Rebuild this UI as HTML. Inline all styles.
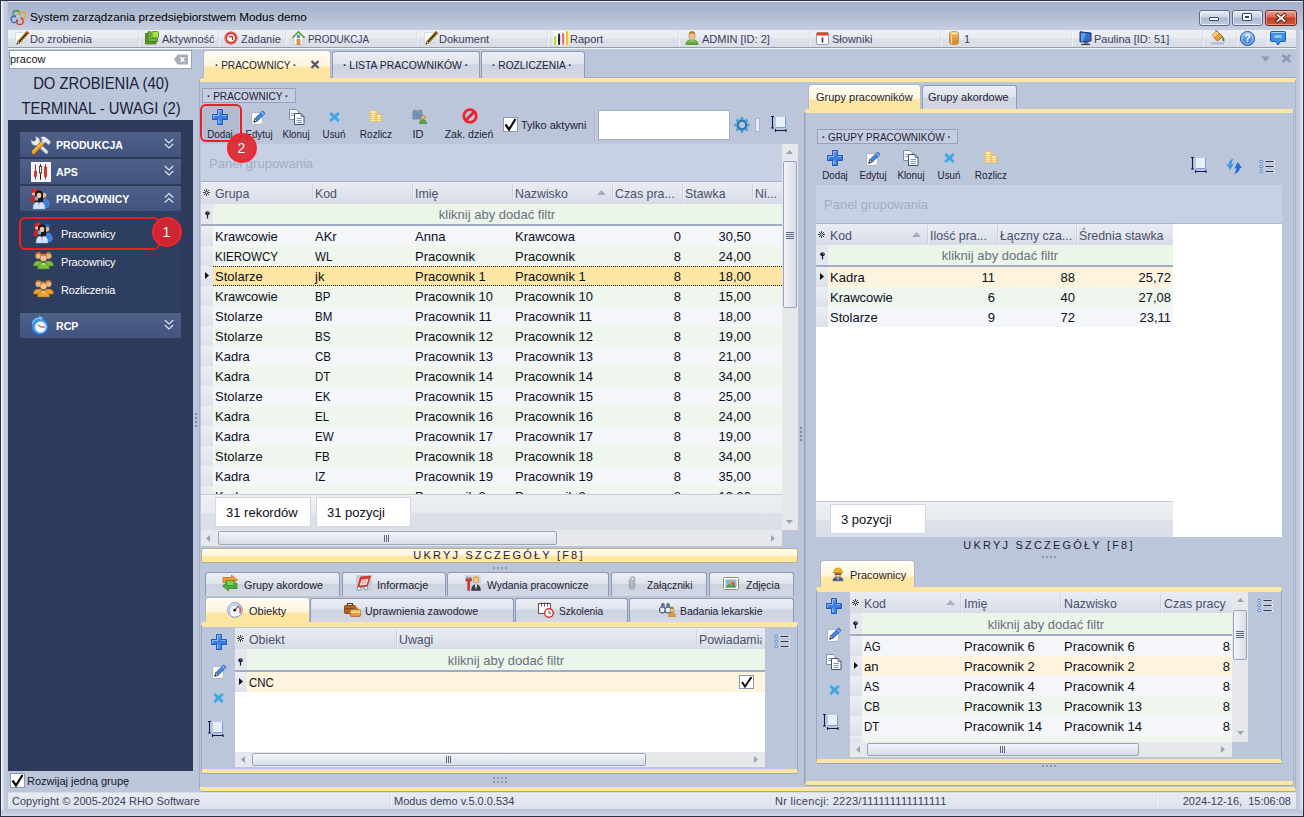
<!DOCTYPE html><html lang="pl"><head><meta charset="utf-8"><title>System zarządzania przedsiębiorstwem Modus demo</title><style>
*{box-sizing:border-box;margin:0;padding:0}
html,body{width:1304px;height:817px;overflow:hidden;background:#bcc6da}
body{font-family:"Liberation Sans","DejaVu Sans",sans-serif;font-size:11px;color:#1e2233;position:relative}
.a{position:absolute;white-space:nowrap}
svg{position:absolute;overflow:visible}
.t11{font-size:11px;line-height:13px}
.t13{font-size:13px;line-height:16px;color:#0c0e18;margin-top:1px}
.hd{font-size:13px;line-height:16px;color:#4b516d;margin-top:1px;transform:scaleX(.95);transform-origin:0 0}
.flt{font-size:13px;line-height:16px;color:#6b6f7c;margin-top:1px}
#frame{left:0;top:0;width:1304px;height:817px;background:#bcc6da;border:1px solid #2b3147}
#title{left:1px;top:1px;width:1302px;height:29px;background:linear-gradient(#a2adc9 0,#acb6cf 30%,#c6cedf 100%)}
#menu{left:8px;top:30px;width:1288px;height:18px;background:linear-gradient(#edf0f4 0,#e8ebf0 47%,#dde1e9 53%,#d9dde7 100%);border-bottom:1px solid #9b9ca2}
.mi{top:33px;font-size:11px;line-height:13px;color:#3a4060}
.msep{top:31px;width:2px;height:15px;border-left:1px solid #dcdfe8;border-right:1px solid #f0f2f6}
.tab{border:1px solid #8f9ab5;border-bottom:none;border-radius:3px 3px 0 0;background:linear-gradient(#eceef4 0,#dfe3ec 45%,#cdd3e0 50%,#d3d8e4 100%)}
.tabA{border:1px solid #aeb7cd;border-bottom:none;border-radius:4px 4px 0 0;background:linear-gradient(#fffdf7 0,#fff5d8 55%,#fde5a2 62%,#fde5a2 100%)}
.yl{background:#fde5a2}
.ghead{background:linear-gradient(#e9ecf2 0,#e1e5ed 50%,#d6dbe6 100%);border-top:1px solid #aab2c8}
.ghead2{background:linear-gradient(#e9ecf2 0,#e1e5ed 50%,#d6dbe6 100%)}
.gsep{background:#a3abc5}
.r0{background:#f5f6fa}
.r1{background:#eef6ee}
.rsel{background:#fde6a3}
.rfoc{background:#fef3dd}
.ind{background:linear-gradient(#eceef4,#dde1ea)}
.sb{background:#e7e8ec}
.thumb{border:1px solid #9aa4bd;border-radius:2px;background:linear-gradient(#f3f5f9,#d7dce7)}
.thumbv{border:1px solid #9aa4bd;border-radius:2px;background:linear-gradient(90deg,#f3f5f9,#d7dce7)}
.cnt{background:#fff;border:1px solid #d3d7e2;font-size:13px;line-height:16px;color:#0c0e18}
.lbl{border:1px solid #98a2bc;background:#c5cee0;font-size:11px;line-height:13px;color:#1e2233}
.nh{left:20px;width:161px;height:25px;background:linear-gradient(#4f6187 0,#485a84 50%,#42547e 100%)}
.nht{left:56px;font-weight:bold;font-size:11px;line-height:13px;color:#fff;transform:scaleX(.96);transform-origin:0 0}
.nit{left:61px;font-size:11px;line-height:13px;color:#fff;letter-spacing:-.2px}
.cb{background:#fff;border:1px solid #8f99b3}
</style></head><body>
<svg width="0" height="0" style="left:0;top:0"><defs>
<linearGradient id="gPlus" x1="0" y1="0" x2="0" y2="1"><stop offset="0" stop-color="#5d9df0"/><stop offset=".5" stop-color="#3a7ae0"/><stop offset="1" stop-color="#4ca6f4"/></linearGradient>
<linearGradient id="gGold" x1="0" y1="0" x2="1" y2="0"><stop offset="0" stop-color="#f5dc86"/><stop offset=".5" stop-color="#fcf0bc"/><stop offset="1" stop-color="#ecc566"/></linearGradient>
<linearGradient id="gRed" x1="0" y1="0" x2="0" y2="1"><stop offset="0" stop-color="#f26a5c"/><stop offset="1" stop-color="#d01818"/></linearGradient>
<linearGradient id="gBlueBall" x1="0" y1="0" x2="0" y2="1"><stop offset="0" stop-color="#8fc2f5"/><stop offset="1" stop-color="#2d6fd0"/></linearGradient>
<linearGradient id="gGreen" x1="0" y1="0" x2="0" y2="1"><stop offset="0" stop-color="#9ad45a"/><stop offset="1" stop-color="#4f9a22"/></linearGradient>
<linearGradient id="gOrange" x1="0" y1="0" x2="0" y2="1"><stop offset="0" stop-color="#f7c068"/><stop offset="1" stop-color="#e08a1e"/></linearGradient>
<radialGradient id="gBadge" cx=".5" cy=".35" r=".7"><stop offset="0" stop-color="#e2303a"/><stop offset="1" stop-color="#c4101c"/></radialGradient>
</defs></svg>
<div id="frame" class="a"></div><div id="title" class="a"></div>
<div class="a " style="left:1px;top:1px;width:1302px;height:1px;background:#f2f4f9"></div>
<div class="a " style="left:1px;top:1px;width:7px;height:815px;background:linear-gradient(90deg,#eef1f7 0,#e1e6f1 25%,#c6cfe1 40%,#bcc6da 100%)"></div>
<div class="a " style="left:1296px;top:30px;width:7px;height:786px;background:linear-gradient(90deg,#bcc6da 0,#c9d1e3 55%,#d9dfec 85%,#e6eaf3 100%)"></div>
<div class="a " style="left:1px;top:810px;width:1302px;height:6px;background:linear-gradient(#bcc6da,#c6cee0 60%,#d5dbe9)"></div>
<svg style="left:10px;top:9px" width="17" height="17" viewBox="0 0 17 17"><circle cx="6.300" cy="4.800" r="3.300" fill="none" stroke="#3f9a3a" stroke-width="1.400"/><circle cx="12" cy="6.300" r="3.300" fill="none" stroke="#e8a820" stroke-width="1.400"/><circle cx="4.500" cy="10.300" r="3.300" fill="none" stroke="#2f6fd0" stroke-width="1.400"/><circle cx="9.800" cy="12.300" r="3.300" fill="none" stroke="#d8402a" stroke-width="1.400"/><circle cx="8.200" cy="8.500" r="2.400" fill="#c9d0e0" opacity=".85"/></svg>
<div class="a " style="left:30px;top:10px;font-size:11.7px;line-height:14px;color:#000">System zarządzania przedsiębiorstwem Modus demo</div>
<div class="a " style="left:1199px;top:10px;width:31px;height:16px;border:1px solid #5d6a8a;border-radius:3px;background:linear-gradient(#e9eef7 0,#c7d2e6 45%,#a9b9d6 50%,#c1cde3 100%);box-shadow:inset 0 0 0 1px rgba(255,255,255,.6)"></div>
<div class="a " style="left:1209px;top:17px;width:10px;height:4px;background:#fff;border:1px solid #3b4560;border-radius:1px"></div>
<div class="a " style="left:1232px;top:10px;width:31px;height:16px;border:1px solid #5d6a8a;border-radius:3px;background:linear-gradient(#e9eef7 0,#c7d2e6 45%,#a9b9d6 50%,#c1cde3 100%);box-shadow:inset 0 0 0 1px rgba(255,255,255,.6)"></div>
<div class="a " style="left:1242px;top:13px;width:10px;height:8px;background:#fff;border:1px solid #3b4560;border-radius:1px"></div>
<div class="a " style="left:1245px;top:16px;width:4px;height:2px;background:#8a94ae;border:1px solid #3b4560"></div>
<div class="a " style="left:1265px;top:10px;width:32px;height:16px;border:1px solid #6a2a22;border-radius:3px;background:linear-gradient(#e8a89a 0,#d8644c 45%,#c23a22 50%,#d05a3a 100%);box-shadow:inset 0 0 0 1px rgba(255,255,255,.35)"></div>
<svg style="left:1276px;top:14px" width="10" height="8" viewBox="0 0 10 8"><path d="M1.500 1l7 6M8.500 1l-7 6" stroke="#3a1a14" stroke-width="3.400" stroke-linecap="square"/><path d="M1.500 1l7 6M8.500 1l-7 6" stroke="#fff" stroke-width="1.800" stroke-linecap="square"/></svg>
<div id="menu" class="a"></div>
<div class="a " style="left:8px;top:48px;width:1288px;height:1px;background:#f3f5f9"></div>
<div class="a mi" style="left:30px;top:33px;">Do zrobienia</div>
<div class="a mi" style="left:162px;top:33px;">Aktywność</div>
<div class="a mi" style="left:241px;top:33px;">Zadanie</div>
<div class="a mi" style="left:308px;top:33px;;transform:scaleX(0.9);transform-origin:0 0">PRODUKCJA</div>
<div class="a mi" style="left:439px;top:33px;">Dokument</div>
<div class="a mi" style="left:570px;top:33px;">Raport</div>
<div class="a mi" style="left:702px;top:33px;">ADMIN [ID: 2]</div>
<div class="a mi" style="left:832px;top:33px;">Słowniki</div>
<div class="a mi" style="left:964px;top:33px;">1</div>
<div class="a mi" style="left:1094px;top:33px;">Paulina [ID: 51]</div>
<div class="a msep" style="left:138px;top:31px;width:2px;height:15px;"></div>
<div class="a msep" style="left:218px;top:31px;width:2px;height:15px;"></div>
<div class="a msep" style="left:285px;top:31px;width:2px;height:15px;"></div>
<div class="a msep" style="left:416px;top:31px;width:2px;height:15px;"></div>
<div class="a msep" style="left:547px;top:31px;width:2px;height:15px;"></div>
<div class="a msep" style="left:678px;top:31px;width:2px;height:15px;"></div>
<div class="a msep" style="left:809px;top:31px;width:2px;height:15px;"></div>
<div class="a msep" style="left:940px;top:31px;width:2px;height:15px;"></div>
<div class="a msep" style="left:1071px;top:31px;width:2px;height:15px;"></div>
<div class="a msep" style="left:1202px;top:31px;width:2px;height:15px;"></div>
<div class="a msep" style="left:1236px;top:31px;width:2px;height:15px;"></div>
<div class="a msep" style="left:1266px;top:31px;width:2px;height:15px;"></div>
<svg style="left:15px;top:31px" width="14" height="16" viewBox="0 0 14 16"><path d="M.500 1.500h9.500v9l-4 4h-5.500z" fill="#fbfbfc" stroke="#d9dce4" stroke-width="1"/><path d="M6 14.500v-4h4z" fill="#e3e5ea" stroke="#c5c8d2" stroke-width=".7"/><path d="M1.800 13.200l1-3.200 8.500-9.300 2.300 2-8.500 9.400z" fill="#f4c41c" stroke="#5a4608" stroke-width=".5"/><path d="M3.700 11.200l8.600-9.500" stroke="#1c1c1c" stroke-width="1.300"/><path d="M11.300 .700l2.300 2 .6-.8-2.200-1.900z" fill="#e02a20"/><path d="M1.800 13.200l1-3.200 2.200 2z" fill="#e9cfa0" stroke="#333" stroke-width=".4"/><path d="M1.800 13.200l.4-1.300.9.800z" fill="#111"/></svg>
<svg style="left:145px;top:31px" width="14" height="14" viewBox="0 0 14 14"><path d="M.5 2.500h3v7.500h7.500v3h-10.500z" fill="#5a9a28" stroke="#3c7216" stroke-width=".8"/><path d="M3 .8h3v6.700h6.500v3h-9.500z" fill="#78b83a" stroke="#3c7216" stroke-width=".8"/><rect x="7" y=".5" width="6.500" height="6.500" rx="1" fill="#a7e04a" stroke="#4c8a1c" stroke-width=".8"/></svg>
<svg style="left:224px;top:31px" width="14" height="14" viewBox="0 0 14 14"><circle cx="7" cy="7" r="6.500" fill="#d8322a"/><circle cx="7" cy="7" r="6" fill="none" stroke="#f28a7a" stroke-width=".8"/><circle cx="7" cy="7" r="4.300" fill="#fff" stroke="#b81c16" stroke-width=".6"/><path d="M5 5.500h3.500v3.500" stroke="#b03028" stroke-width="1.300" fill="none"/></svg>
<svg style="left:292px;top:31px" width="13" height="14" viewBox="0 0 13 14"><path d="M2 6.500v7h9v-7" fill="#fff" stroke="#b9bdc8" stroke-width=".8"/><path d="M.3 7l6.200-6.300 6.200 6.300" fill="none" stroke="#4f9a2c" stroke-width="1.500" stroke-linejoin="round"/><rect x="5" y="8.500" width="3" height="5" fill="#e89a30" stroke="#a8641a" stroke-width=".5"/><rect x="5.300" y="4.500" width="2.400" height="2.400" fill="#5a8fd8" stroke="#2f5fa8" stroke-width=".4"/></svg>
<svg style="left:424px;top:31px" width="14" height="16" viewBox="0 0 14 16"><path d="M.500 1.500h9.500v9l-4 4h-5.500z" fill="#fbfbfc" stroke="#d9dce4" stroke-width="1"/><path d="M6 14.500v-4h4z" fill="#e3e5ea" stroke="#c5c8d2" stroke-width=".7"/><path d="M1.800 13.200l1-3.200 8.500-9.300 2.300 2-8.500 9.400z" fill="#f4c41c" stroke="#5a4608" stroke-width=".5"/><path d="M3.700 11.200l8.600-9.500" stroke="#1c1c1c" stroke-width="1.300"/><path d="M11.300 .700l2.300 2 .6-.8-2.200-1.900z" fill="#e02a20"/><path d="M1.800 13.200l1-3.200 2.200 2z" fill="#e9cfa0" stroke="#333" stroke-width=".4"/><path d="M1.800 13.200l.4-1.300.9.800z" fill="#111"/></svg>
<svg style="left:553px;top:31px" width="16" height="14" viewBox="0 0 16 14"><rect x="0" y="0" width="16" height="14" fill="#fff"/><rect x="1" y="5" width="2.200" height="9" fill="#c9d426"/><rect x="5" y="2.500" width="2.200" height="11.500" rx="1" fill="#25324f"/><rect x="9" y="2" width="2.200" height="12" rx="1" fill="#ee6a78"/><rect x="13" y="0" width="2.400" height="14" fill="#f5c416"/></svg>
<svg style="left:685px;top:31px" width="14" height="14" viewBox="0 0 14 14"><path d="M.800 13.500q.4-4 3.700-4.500l2.500 1.500 2.500-1.500q3.300.5 3.700 4.500z" fill="url(#gGreen)" stroke="#3f7f1c" stroke-width=".6"/><path d="M4 4.500q0-4 3-4t3 4q0 4.500-3 4.500t-3-4.500z" fill="#f1c08a" stroke="#a8702c" stroke-width=".6"/><path d="M3.800 4q.2-3.700 3.200-3.700t3.200 3.700q-1.500-1.800-3.200-1.800t-3.200 1.800z" fill="#b87a2a"/></svg>
<svg style="left:816px;top:32px" width="13" height="13" viewBox="0 0 13 13"><rect x=".500" y=".500" width="12" height="12" rx="1.500" fill="#fff" stroke="#9aa0b0" stroke-width="1"/><path d="M.500 2q0-1.500 1.500-1.500h9q1.500 0 1.500 1.500v1.500h-12z" fill="#e0452c"/><path d="M6.500 5.500v5" stroke="#333" stroke-width="1.600"/></svg>
<svg style="left:949px;top:31px" width="10" height="14" viewBox="0 0 10 14"><path d="M.500 2.500v9q0 2 4.500 2t4.500-2v-9z" fill="url(#gOrange)" stroke="#b8741a" stroke-width=".7"/><ellipse cx="5" cy="2.500" rx="4.500" ry="2" fill="#fbe0a0" stroke="#b8741a" stroke-width=".7"/><path d="M.500 5.500q0 2 4.500 2t4.500-2M.500 8.500q0 2 4.500 2t4.500-2" fill="none" stroke="#b8741a" stroke-width=".6"/><path d="M2.500 4.500v8" stroke="#fdf0c8" stroke-width="1.200" opacity=".8"/></svg>
<svg style="left:1079px;top:31px" width="13" height="14" viewBox="0 0 13 14"><path d="M1 .800l11 1.200v8l-11 1z" fill="#2f6fd0" stroke="#1b2f5c" stroke-width="1"/><path d="M2 2l5 .6-3 7.600-2 .2z" fill="#6fa8f0" opacity=".8"/><path d="M5 11l4-.3.800 2h-5.600z" fill="#5b6478"/><path d="M2 13.500h9" stroke="#3b4258" stroke-width="1.200"/></svg>
<svg style="left:1210px;top:30px" width="15" height="15" viewBox="0 0 15 15"><path d="M2 5l5-4 5.500 5.500-5 4.500z" fill="#f0a030" stroke="#8a5210" stroke-width=".8"/><path d="M2 5l5-4 2 2-5 4z" fill="#fbd48a"/><path d="M12.500 6.500q2.500 2.500 1.500 5-2-1-1.500-5z" fill="#3fa04a" stroke="#1f6a2a" stroke-width=".5"/><path d="M5 .800q2-.8 3 1.500" fill="none" stroke="#555" stroke-width=".8"/><rect x="1" y="12.500" width="13" height="1.800" fill="#aeb4c4"/></svg>
<svg style="left:1240px;top:31px" width="15" height="15" viewBox="0 0 15 15"><circle cx="7.500" cy="7.500" r="7" fill="url(#gBlueBall)" stroke="#2a4fa0" stroke-width="1"/><circle cx="7.500" cy="7.500" r="5.600" fill="none" stroke="#cfe2fb" stroke-width=".8"/><text x="7.500" y="11.300" text-anchor="middle" font-family="Liberation Sans,sans-serif" font-weight="bold" font-size="10.500" fill="#fff">?</text></svg>
<svg style="left:1270px;top:31px" width="16" height="15" viewBox="0 0 16 15"><path d="M.500 1.500q0-1 1-1h13q1 0 1 1v8q0 1-1 1h-4l-2.500 3.500-2.500-3.500h-4q-1 0-1-1z" fill="#3f8fe0" stroke="#1b5fb0" stroke-width="1"/><path d="M1.500 1.500h13" stroke="#a8d0f8" stroke-width="1"/><circle cx="5.500" cy="5.500" r="1" fill="none" stroke="#fff" stroke-width=".7"/><circle cx="8" cy="5.500" r="1" fill="none" stroke="#fff" stroke-width=".7"/><circle cx="10.500" cy="5.500" r="1" fill="none" stroke="#fff" stroke-width=".7"/></svg>
<div class="a " style="left:8px;top:792px;width:1288px;height:17px;background:linear-gradient(#e8ebf1,#dde1ea);border-top:1px solid #d5dae5"></div>
<div class="a t11" style="left:12px;top:795px;color:#3a4060">Copyright © 2005-2024 RHO Software</div>
<div class="a t11" style="left:394px;top:795px;color:#3a4060">Modus demo v.5.0.0.534</div>
<div class="a t11" style="left:775px;top:795px;color:#3a4060;letter-spacing:.3px">Nr licencji: 2223/111111111111111</div>
<div class="a t11" style="right:13px;top:795px;color:#3a4060">2024-12-16,&nbsp; 15:06:08</div>
<div class="a msep" style="left:390px;top:794px;width:2px;height:15px;"></div>
<div class="a msep" style="left:771px;top:794px;width:2px;height:15px;"></div>
<div class="a msep" style="left:1156px;top:794px;width:2px;height:15px;"></div>
<div class="a " style="left:9px;top:50px;width:183px;height:19px;background:#fff;border:1px solid #97a2bd"></div>
<div class="a t11" style="left:10px;top:53px;color:#15182a">pracow</div>
<svg style="left:174px;top:54px" width="14" height="11" viewBox="0 0 14 11"><path d="M0 5.500l3.500-5h9.500q1 0 1 1v8q0 1-1 1h-9.500z" fill="#a9adb6"/><path d="M6.500 3.300l4 4.400M10.500 3.300l-4 4.400" stroke="#fff" stroke-width="1.400"/></svg>
<div class="a " style="left:5.5px;width:190px;text-align:center;top:75px;font-size:16px;line-height:18px;color:#1a2038;transform:scaleX(0.925)">DO ZROBIENIA (40)</div>
<div class="a " style="left:6.0px;width:190px;text-align:center;top:100px;font-size:16px;line-height:18px;color:#1a2038;transform:scaleX(0.925)">TERMINAL - UWAGI (2)</div>
<div class="a " style="left:8px;top:120px;width:185px;height:651px;background:#2d3a59"></div>
<div class="a " style="left:20px;top:211px;width:161px;height:100px;background-color:#2d3d60;background-image:radial-gradient(circle,#37476c 0.6px,transparent 0.9px);background-size:3px 3px"></div>
<div class="a nh" style="left:20px;top:132px;width:161px;height:25px;"></div>
<svg style="left:31px;top:136px" width="21" height="18" viewBox="0 0 21 18"><path d="M6.500 7.500l9 8.500" stroke="#8e97ab" stroke-width="4" stroke-linecap="round"/><path d="M6.500 7.500l9 8.500" stroke="#dfe4ee" stroke-width="2.600" stroke-linecap="round"/><circle cx="4.600" cy="5.200" r="4.300" fill="#e8ecf3" stroke="#9aa3b6" stroke-width=".6"/><circle cx="2.600" cy="3" r="2.400" fill="#485b85"/><path d="M11.200 7.300l-8.700 8.700" stroke="#a8611a" stroke-width="4.600" stroke-linecap="round"/><path d="M11.200 7.300l-8.700 8.700" stroke="#f0a22a" stroke-width="3.400" stroke-linecap="round"/><path d="M10.500 7l-7.500 7.500" stroke="#f9cf7a" stroke-width="1" stroke-linecap="round"/><path d="M9.300 1.600q3.700-2.300 7 1.200l3.700 3.500-2.600 2.600-2.700-2.700-2.200 1.100-2-2q1.800-2-1.200-3.700z" fill="#e3e7ef" stroke="#8e97ab" stroke-width=".6" stroke-linejoin="round"/><path d="M11 1.500q2.500-.8 4.800 1.600l2.800 2.800" fill="none" stroke="#fff" stroke-width=".9"/></svg>
<div class="a nht" style="left:56px;top:139px;">PRODUKCJA</div>
<svg style="left:164px;top:138px" width="10" height="11" viewBox="0 0 10 11"><path d="M.800 1l4.200 4 4.200-4M.800 6l4.200 4 4.200-4" fill="none" stroke="#e3e7f0" stroke-width="1.050"/></svg>
<div class="a nh" style="left:20px;top:159px;width:161px;height:25px;"></div>
<svg style="left:31px;top:162px" width="20" height="20" viewBox="0 0 20 20"><rect width="20" height="20" fill="#f6f6f8"/><path d="M4.500 2.500v15M9.500 2.500v15M14.500 2v15.500" stroke="#b82020" stroke-width="1"/><path d="M9.500 2.500v15" stroke="#222" stroke-width="1"/><rect x="3.200" y="9.500" width="2.600" height="5" fill="#d83a30" stroke="#a81c18" stroke-width=".5"/><rect x="8.500" y="4.500" width="2.200" height="6.500" fill="#f6f6f8" stroke="#222" stroke-width=".8"/><rect x="13.200" y="5" width="2.600" height="9.500" fill="#d83a30" stroke="#a81c18" stroke-width=".5"/></svg>
<div class="a nht" style="left:56px;top:166px;">APS</div>
<svg style="left:164px;top:165px" width="10" height="11" viewBox="0 0 10 11"><path d="M.800 1l4.200 4 4.200-4M.800 6l4.200 4 4.200-4" fill="none" stroke="#e3e7f0" stroke-width="1.050"/></svg>
<div class="a nh" style="left:20px;top:186px;width:161px;height:25px;"></div>
<svg style="left:30px;top:188px" width="21" height="22" viewBox="0 0 21 22"><g><path d="M.500 14q0-6 3-7.500l3 1v7z" fill="#c8281e"/><circle cx="4.500" cy="5" r="2.600" fill="#f0c09a"/><path d="M1.500 4.500q0-4 3.500-4t3.500 3.500l-7 1z" fill="#e0281e"/><path d="M12 20l0-8 3.500-1.500q4 1 4.500 6.500l-2 3z" fill="#3f7fd8"/><circle cx="13.500" cy="7" r="2.800" fill="#e8b88a"/><path d="M10 5.500q0-3.500 4-3.500 3 0 3.500 3l-7.500 1z" fill="#2c5fb8"/><rect x="12" y="4.800" width="3" height="1" fill="#e8c040"/><path d="M5 6q0-3.500 4-3.500t4 3.500v8h-8z" fill="#15151a"/><ellipse cx="9" cy="7.500" rx="2.300" ry="2.800" fill="#f2c8a8"/><rect x="5" y="8.500" width="3" height="4" fill="#7fc0e8" opacity=".9"/><path d="M3 21q0-6 4-7l2 1.500 2-1.500q4 1 4 7z" fill="#cfe6fa" stroke="#8cb8e0" stroke-width=".5"/><path d="M7.500 15l1.500 5 1.500-5-1.500 1z" fill="#f0a8c0"/></g></svg>
<div class="a nht" style="left:56px;top:193px;">PRACOWNICY</div>
<svg style="left:164px;top:192px" width="10" height="11" viewBox="0 0 10 11"><path d="M.800 5.500l4.200-4 4.200 4M.800 10.500l4.200-4 4.200 4" fill="none" stroke="#e3e7f0" stroke-width="1.050"/></svg>
<div class="a nh" style="left:20px;top:313px;width:161px;height:25px;"></div>
<svg style="left:30px;top:316px" width="20" height="20" viewBox="0 0 20 20"><circle cx="10" cy="10.500" r="8.500" fill="#3f8fe0" stroke="#1b5fb0" stroke-width="1"/><path d="M1.500 8q1-6 8-7l-1-1.500 5 2.500-4.500 3 .5-2q-5 1-6 5z" fill="#7fc0f5" stroke="#2f7fd0" stroke-width=".4"/><circle cx="10.500" cy="11" r="5.600" fill="#f4f8fd" stroke="#a8c8e8" stroke-width=".8"/><path d="M10.500 11h4.500" stroke="#d82020" stroke-width="1"/><path d="M10.500 11l-2.500-2.500" stroke="#444" stroke-width="1"/></svg>
<div class="a nht" style="left:56px;top:320px;">RCP</div>
<svg style="left:164px;top:319px" width="10" height="11" viewBox="0 0 10 11"><path d="M.800 1l4.200 4 4.200-4M.800 6l4.200 4 4.200-4" fill="none" stroke="#e3e7f0" stroke-width="1.050"/></svg>
<svg style="left:33px;top:222px" width="21" height="22" viewBox="0 0 21 22"><g><path d="M.500 14q0-6 3-7.500l3 1v7z" fill="#c8281e"/><circle cx="4.500" cy="5" r="2.600" fill="#f0c09a"/><path d="M1.500 4.500q0-4 3.500-4t3.500 3.500l-7 1z" fill="#e0281e"/><path d="M12 20l0-8 3.500-1.500q4 1 4.500 6.500l-2 3z" fill="#3f7fd8"/><circle cx="13.500" cy="7" r="2.800" fill="#e8b88a"/><path d="M10 5.500q0-3.500 4-3.500 3 0 3.500 3l-7.500 1z" fill="#2c5fb8"/><rect x="12" y="4.800" width="3" height="1" fill="#e8c040"/><path d="M5 6q0-3.500 4-3.500t4 3.500v8h-8z" fill="#15151a"/><ellipse cx="9" cy="7.500" rx="2.300" ry="2.800" fill="#f2c8a8"/><rect x="5" y="8.500" width="3" height="4" fill="#7fc0e8" opacity=".9"/><path d="M3 21q0-6 4-7l2 1.500 2-1.500q4 1 4 7z" fill="#cfe6fa" stroke="#8cb8e0" stroke-width=".5"/><path d="M7.500 15l1.500 5 1.500-5-1.500 1z" fill="#f0a8c0"/></g></svg>
<div class="a nit" style="left:61px;top:228px;">Pracownicy</div>
<svg style="left:33px;top:251px" width="21" height="19" viewBox="0 0 21 19"><circle cx="5.5" cy="5" r="3" fill="#e9b98a" stroke="#a8702c" stroke-width=".5"/><path d="M2.5 4q0-3 3-3t3 3q-1.500-1.200-3-1.200t-3 1.200z" fill="#b8742a"/><path d="M0.5 15q0-5 5-5t5 5z" fill="#7fc03a" stroke="#3f7f1c" stroke-width=".5"/><circle cx="15.5" cy="5" r="3" fill="#e9b98a" stroke="#a8702c" stroke-width=".5"/><path d="M12.5 4q0-3 3-3t3 3q-1.500-1.200-3-1.200t-3 1.200z" fill="#b8742a"/><path d="M10.5 15q0-5 5-5t5 5z" fill="#7fc03a" stroke="#3f7f1c" stroke-width=".5"/><circle cx="10.5" cy="7" r="3.400" fill="#f1c49a" stroke="#a8702c" stroke-width=".5"/><path d="M7.1 6q0-3.500 3.400-3.500t3.400 3.500q-1.700-1.300-3.400-1.300t-3.400 1.300z" fill="#c8842a"/><path d="M4.5 18q0-6 6-6t6 6z" fill="#7fc03a" stroke="#3f7f1c" stroke-width=".5"/><path d="M9.0 12.3l1.500 2 1.500-2z" fill="#fff"/></svg>
<div class="a nit" style="left:61px;top:256px;">Pracownicy</div>
<svg style="left:33px;top:279px" width="21" height="19" viewBox="0 0 21 19"><circle cx="5.5" cy="5" r="3" fill="#e9b98a" stroke="#a8702c" stroke-width=".5"/><path d="M2.5 4q0-3 3-3t3 3q-1.500-1.200-3-1.200t-3 1.200z" fill="#b8742a"/><path d="M0.5 15q0-5 5-5t5 5z" fill="#f0a030" stroke="#a8681a" stroke-width=".5"/><circle cx="15.5" cy="5" r="3" fill="#e9b98a" stroke="#a8702c" stroke-width=".5"/><path d="M12.5 4q0-3 3-3t3 3q-1.500-1.200-3-1.200t-3 1.200z" fill="#b8742a"/><path d="M10.5 15q0-5 5-5t5 5z" fill="#f0a030" stroke="#a8681a" stroke-width=".5"/><circle cx="10.5" cy="7" r="3.400" fill="#f1c49a" stroke="#a8702c" stroke-width=".5"/><path d="M7.1 6q0-3.500 3.400-3.500t3.400 3.500q-1.700-1.300-3.400-1.300t-3.400 1.300z" fill="#c8842a"/><path d="M4.5 18q0-6 6-6t6 6z" fill="#f0a030" stroke="#a8681a" stroke-width=".5"/><path d="M9.0 12.3l1.500 2 1.500-2z" fill="#fff"/></svg>
<div class="a nit" style="left:61px;top:284px;">Rozliczenia</div>
<div class="a cb" style="left:10px;top:773px;width:15px;height:15px;"></div>
<svg style="left:11px;top:774px" width="13" height="13" viewBox="0 0 13 13"><path d="M1.500 6.500l3.500 5 6.500-10.500" fill="none" stroke="#0a0a0a" stroke-width="2.200"/></svg>
<div class="a t11" style="left:27px;top:775px;color:#15182a">Rozwijaj jedną grupę</div>
<div class="a " style="left:195px;top:413px;width:2px;height:2px;background:#7b86a8"></div>
<div class="a " style="left:195px;top:417px;width:2px;height:2px;background:#7b86a8"></div>
<div class="a " style="left:195px;top:421px;width:2px;height:2px;background:#7b86a8"></div>
<div class="a " style="left:195px;top:425px;width:2px;height:2px;background:#7b86a8"></div>
<div class="a " style="left:200px;top:77px;width:1096px;height:1px;background:#a3aec8"></div>
<div class="a tabA" style="left:203px;top:50px;width:128px;height:28px;"></div>
<div class="a t11" style="left:215px;top:59px;color:#1e2233;transform:scaleX(0.915);transform-origin:0 0"><b>·</b> PRACOWNICY <b>·</b></div>
<svg style="left:310px;top:60px" width="10" height="9" viewBox="0 0 10 9"><path d="M1.500 1l7 7M8.500 1l-7 7" stroke="#4b5268" stroke-width="2.200"/></svg>
<div class="a tab" style="left:332px;top:51px;width:148px;height:27px;"></div>
<div class="a t11" style="left:343px;top:59px;color:#1e2233;transform:scaleX(0.945);transform-origin:0 0"><b>·</b> LISTA PRACOWNIKÓW <b>·</b></div>
<div class="a tab" style="left:481px;top:51px;width:104px;height:27px;"></div>
<div class="a t11" style="left:492px;top:59px;color:#1e2233;transform:scaleX(0.93);transform-origin:0 0"><b>·</b> ROZLICZENIA <b>·</b></div>
<svg style="left:1261px;top:56px" width="9" height="6" viewBox="0 0 9 6"><path d="M0 .500h9l-4.500 5z" fill="#8e98b4"/></svg>
<svg style="left:1281px;top:54px" width="11" height="9" viewBox="0 0 11 9"><path d="M1.500 1l8 7M9.500 1l-8 7" stroke="#8e98b4" stroke-width="2.400"/></svg>
<div class="a yl" style="left:200px;top:78px;width:1096px;height:4px;border-radius:2px 2px 0 0"></div>
<div class="a yl" style="left:200px;top:787px;width:1096px;height:4px;border-radius:0 0 2px 2px;box-shadow:0 1px 0 #9ba7c1"></div>
<div class="a " style="left:199px;top:80px;width:1px;height:709px;background:#a3aec7"></div>
<div class="a " style="left:1295px;top:80px;width:1px;height:709px;background:#a9b3ca"></div>
<div class="a lbl" style="left:202px;top:88px;width:94px;height:15px;"></div>
<div class="a t11" style="left:207px;top:90px;;transform:scaleX(0.915);transform-origin:0 0"><b>·</b> PRACOWNICY <b>·</b></div>
<div class="a " style="left:203px;top:106px;width:36px;height:34px;background:#b2bbd0;border-radius:2px"></div>
<svg style="left:212px;top:109px" width="16" height="16" viewBox="0 0 16 16"><path d="M5.600 .600h4.800v5h5v4.800h-5v5h-4.800v-5h-5v-4.800h5z" fill="none" stroke="#e4ebf7" stroke-width="2.200" stroke-linejoin="round" opacity=".35"/><path d="M5.600 .600h4.800v5h5v4.800h-5v5h-4.800v-5h-5v-4.800h5z" fill="url(#gPlus)" stroke="#2257b8" stroke-width="1.100" stroke-linejoin="round"/><path d="M6.600 6.600v-5h2.800M1.600 9.400v-2.800h5M6.600 14.400v-4" fill="none" stroke="#a9cdf9" stroke-width=".9" opacity=".9"/><path d="M10.500 6.600h3.900" fill="none" stroke="#a9cdf9" stroke-width=".9" opacity=".9"/></svg>
<svg style="left:250px;top:109px" width="16" height="16" viewBox="0 0 16 16"><path d="M3 3.500h6.500l3 3v9h-11v-10.500q0-1.500 1.500-1.500z" fill="#fdfdfe" stroke="#aeb4c2" stroke-width="1" stroke-linejoin="round"/><path d="M12.500 15.500l-3-.5 3-2.500z" fill="#d5d9e2"/><path d="M3.800 13.200l1.200-3.600 7.600-7.600 2.400 2.400-7.600 7.600z" fill="#3c8ae6" stroke="#1a4a9a" stroke-width=".8" stroke-linejoin="round"/><path d="M3.800 13.200l1.200-3.600 2.400 2.400z" fill="#f0d8b0" stroke="#222" stroke-width=".6"/><path d="M3.800 13.200l.5-1.500 1 1z" fill="#111"/><path d="M11.400 3.200l2.400 2.400" stroke="#9cc4f4" stroke-width="1.200"/></svg>
<svg style="left:289px;top:109px" width="16" height="16" viewBox="0 0 16 16"><path d="M.500 .500h6.500l2.500 2.500v7.500h-9z" fill="#fbfcfe" stroke="#7f8da8" stroke-width="1"/><path d="M2 4.500h5M2 6.500h3" stroke="#8da3cc" stroke-width="1"/><path d="M5.500 4.500h6.500l3 3v8h-9.500z" fill="#fff" stroke="#44546f" stroke-width="1"/><path d="M12 4.500v3h3" fill="none" stroke="#44546f" stroke-width=".8"/><path d="M7.500 9.500h5.500M7.500 11.500h5.500M7.500 13.500h5.500" stroke="#7e97c4" stroke-width="1"/></svg>
<svg style="left:328px;top:111px" width="13" height="12.0" viewBox="0 0 13 12"><path d="M1 3l2.200-2.200 3.300 3 3.300-3 2.200 2.200-3.200 3 3.200 3-2.200 2.200-3.300-3-3.300 3-2.200-2.200 3.200-3z" fill="#46a2de" stroke="#8fcbee" stroke-width=".9" stroke-linejoin="round"/></svg>
<svg style="left:369px;top:110px" width="14" height="12" viewBox="0 0 14 12"><ellipse cx="4.500" cy="10" rx="3.800" ry="1.700" fill="url(#gGold)" stroke="#e0b64e" stroke-width=".6"/><ellipse cx="4.500" cy="8" rx="3.800" ry="1.700" fill="url(#gGold)" stroke="#e0b64e" stroke-width=".6"/><ellipse cx="4.500" cy="6" rx="3.800" ry="1.700" fill="url(#gGold)" stroke="#e0b64e" stroke-width=".6"/><ellipse cx="4.500" cy="4" rx="3.800" ry="1.700" fill="url(#gGold)" stroke="#e0b64e" stroke-width=".6"/><ellipse cx="4.500" cy="2" rx="3.800" ry="1.700" fill="url(#gGold)" stroke="#e0b64e" stroke-width=".6"/><ellipse cx="10.200" cy="10" rx="3.300" ry="1.600" fill="url(#gGold)" stroke="#e0b64e" stroke-width=".6"/><ellipse cx="10.200" cy="8" rx="3.300" ry="1.600" fill="url(#gGold)" stroke="#e0b64e" stroke-width=".6"/><ellipse cx="10.200" cy="6" rx="3.300" ry="1.600" fill="url(#gGold)" stroke="#e0b64e" stroke-width=".6"/></svg>
<svg style="left:412px;top:109px" width="15" height="15" viewBox="0 0 15 15"><path d="M1 3.5q0-2.500 2-2.500t2 2.500v6.500h-4zM6 3.500q0-2.500 2-2.500t2 2.500v6.500h-4z" fill="#8c99b4" stroke="#5c6a88" stroke-width=".7"/><rect x="1.200" y="5" width="3.600" height="3" fill="#5f8fd8"/><rect x="6.200" y="5" width="3.600" height="3" fill="#5f8fd8"/><circle cx="11" cy="8.500" r="2.200" fill="#e9b27a" stroke="#a86a2a" stroke-width=".6"/><path d="M7.500 14.500q0-3.500 3.500-3.500t3.500 3.500z" fill="#58a83a" stroke="#3a7a22" stroke-width=".6"/></svg>
<svg style="left:462px;top:108px" width="16" height="16" viewBox="0 0 16 16"><circle cx="8" cy="8" r="6.300" fill="none" stroke="#e8222a" stroke-width="2.800"/><path d="M3.800 12.200l8.400-8.400" stroke="#e8222a" stroke-width="2.800"/><circle cx="8" cy="8" r="7.600" fill="none" stroke="#f37a78" stroke-width=".5"/></svg>
<div class="a " style="left:180.0px;width:80px;text-align:center;top:128px;font-size:11px;line-height:13px;color:#1e2233;transform:scaleX(0.89)">Dodaj</div>
<div class="a " style="left:218.5px;width:80px;text-align:center;top:128px;font-size:11px;line-height:13px;color:#1e2233;transform:scaleX(0.89)">Edytuj</div>
<div class="a " style="left:256.0px;width:80px;text-align:center;top:128px;font-size:11px;line-height:13px;color:#1e2233;transform:scaleX(0.89)">Klonuj</div>
<div class="a " style="left:294.0px;width:80px;text-align:center;top:128px;font-size:11px;line-height:13px;color:#1e2233;transform:scaleX(0.89)">Usuń</div>
<div class="a " style="left:335.5px;width:80px;text-align:center;top:128px;font-size:11px;line-height:13px;color:#1e2233;transform:scaleX(0.91)">Rozlicz</div>
<div class="a " style="left:378.0px;width:80px;text-align:center;top:128px;font-size:11px;line-height:13px;color:#1e2233;transform:scaleX(1)">ID</div>
<div class="a " style="left:429.0px;width:80px;text-align:center;top:128px;font-size:11px;line-height:13px;color:#1e2233;transform:scaleX(0.96)">Zak. dzień</div>
<div class="a cb" style="left:503px;top:117px;width:15px;height:15px;"></div>
<svg style="left:504px;top:118px" width="13" height="13" viewBox="0 0 13 13"><path d="M1.500 6.500l3.500 5 6.500-10.500" fill="none" stroke="#0a0a0a" stroke-width="2.200"/></svg>
<div class="a t11" style="left:521px;top:119px;color:#1e2233">Tylko aktywni</div>
<div class="a " style="left:594px;top:109px;width:2px;height:31px;border-left:1px solid #aab3c9;border-right:1px solid #ccd4e4"></div>
<div class="a " style="left:598px;top:110px;width:132px;height:30px;background:#fff;border:1px solid #a2acc5"></div>
<svg style="left:734px;top:117px" width="16" height="16" viewBox="0 0 16 16"><g transform="translate(8 8)"><circle cx="0" cy="-6.600" r="1.300" fill="#2a9ec8" transform="rotate(0)"/><circle cx="0" cy="-6.600" r="1.300" fill="#2a9ec8" transform="rotate(45)"/><circle cx="0" cy="-6.600" r="1.300" fill="#2a9ec8" transform="rotate(90)"/><circle cx="0" cy="-6.600" r="1.300" fill="#2a9ec8" transform="rotate(135)"/><circle cx="0" cy="-6.600" r="1.300" fill="#2a9ec8" transform="rotate(180)"/><circle cx="0" cy="-6.600" r="1.300" fill="#2a9ec8" transform="rotate(225)"/><circle cx="0" cy="-6.600" r="1.300" fill="#2a9ec8" transform="rotate(270)"/><circle cx="0" cy="-6.600" r="1.300" fill="#2a9ec8" transform="rotate(315)"/><circle r="6.200" fill="none" stroke="#6fa8d0" stroke-width=".6"/><circle r="4.300" fill="none" stroke="#2477b8" stroke-width="2.200"/></g></svg>
<div class="a " style="left:755px;top:118px;width:5px;height:14px;background:#e6e9f0;border:1px solid #a9b2c8"></div>
<svg style="left:771px;top:116px" width="16" height="16" viewBox="0 0 16 16"><path d="M0 .500h3M1.500 .500v11.500M0 12h3" stroke="#0f1c4c" stroke-width="1.100" fill="none"/><rect x="4.500" y=".500" width="10" height="11" fill="#e9eef8" stroke="#b9c9ea" stroke-width="1"/><path d="M14.500 1v10.500h-9.500" fill="none" stroke="#6f98d6" stroke-width=".9"/><path d="M4.500 14.500h10.500M4.500 13v3M15 13v3" stroke="#0f1c4c" stroke-width="1.100" fill="none"/></svg>
<div class="a " style="left:201px;top:144px;width:581px;height:37px;background:#c8d1e3"></div>
<div class="a " style="left:209px;top:156px;font-size:13px;line-height:16px;color:#a3adc4">Panel grupowania</div>
<div class="a ghead" style="left:201px;top:181px;width:581px;height:23px;"></div>
<svg style="left:203px;top:189px" width="7" height="7" viewBox="0 0 7 7"><path d="M3.500 0v7M0 3.500h7M1 1l5 5M6 1l-5 5" stroke="#15151c" stroke-width=".8"/><circle cx="3.500" cy="3.500" r="1" fill="#f2f3f7"/></svg>
<div class="a hd" style="left:215px;top:185px;">Grupa</div>
<div class="a hd" style="left:315px;top:185px;">Kod</div>
<div class="a " style="left:312px;top:183px;width:2px;height:20px;border-left:1px solid #ccd1de;border-right:1px solid #eef0f5"></div>
<div class="a hd" style="left:415px;top:185px;">Imię</div>
<div class="a " style="left:412px;top:183px;width:2px;height:20px;border-left:1px solid #ccd1de;border-right:1px solid #eef0f5"></div>
<div class="a hd" style="left:515px;top:185px;">Nazwisko</div>
<div class="a " style="left:512px;top:183px;width:2px;height:20px;border-left:1px solid #ccd1de;border-right:1px solid #eef0f5"></div>
<div class="a hd" style="left:615px;top:185px;">Czas pra...</div>
<div class="a " style="left:612px;top:183px;width:2px;height:20px;border-left:1px solid #ccd1de;border-right:1px solid #eef0f5"></div>
<div class="a hd" style="left:685px;top:185px;">Stawka</div>
<div class="a " style="left:682px;top:183px;width:2px;height:20px;border-left:1px solid #ccd1de;border-right:1px solid #eef0f5"></div>
<div class="a hd" style="left:755px;top:185px;">Ni...</div>
<div class="a " style="left:752px;top:183px;width:2px;height:20px;border-left:1px solid #ccd1de;border-right:1px solid #eef0f5"></div>
<svg style="left:597px;top:190px" width="9" height="5" viewBox="0 0 9 5"><path d="M0 5l4.500-5 4.500 5z" fill="#a5adc2"/></svg>
<div class="a " style="left:201px;top:204px;width:12px;height:20px;background:#e4e7ee"></div>
<svg style="left:205px;top:211px" width="5" height="8" viewBox="0 0 5 8"><ellipse cx="2.500" cy="2.200" rx="2.300" ry="2" fill="#1c1c24"/><circle cx="3" cy="1.800" r=".6" fill="#f0f0f4"/><path d="M2.500 4v3.500" stroke="#1c1c24" stroke-width="1.200"/></svg>
<div class="a " style="left:213px;top:204px;width:569px;height:20px;background:#ebf5ea"></div>
<div class="a flt" style="left:347.0px;width:300px;text-align:center;top:206px;">kliknij aby dodać filtr</div>
<div class="a gsep" style="left:201px;top:224px;width:581px;height:2px;"></div>
<div class="a" style="left:201px;top:226px;width:581px;height:268px;overflow:hidden">
<div class="a ind" style="left:0;top:0px;width:12px;height:20px"></div>
<div class="a r0" style="left:12px;top:0px;width:569px;height:20px"></div>
<div class="a t13" style="left:14px;top:2px">Krawcowie</div>
<div class="a t13" style="left:114px;top:2px">AKr</div>
<div class="a t13" style="left:214px;top:2px">Anna</div>
<div class="a t13" style="left:314px;top:2px">Krawcowa</div>
<div class="a t13" style="right:101px;top:2px">0</div>
<div class="a t13" style="right:31px;top:2px">30,50</div>
<div class="a ind" style="left:0;top:20px;width:12px;height:20px"></div>
<div class="a r1" style="left:12px;top:20px;width:569px;height:20px"></div>
<div class="a t13" style="left:14px;top:22px;transform:scaleX(.89);transform-origin:0 0">KIEROWCY</div>
<div class="a t13" style="left:114px;top:22px;transform:scaleX(.89);transform-origin:0 0">WL</div>
<div class="a t13" style="left:214px;top:22px">Pracownik</div>
<div class="a t13" style="left:314px;top:22px">Pracownik</div>
<div class="a t13" style="right:101px;top:22px">8</div>
<div class="a t13" style="right:31px;top:22px">24,00</div>
<div class="a ind" style="left:0;top:40px;width:12px;height:20px"></div>
<div class="a rsel" style="left:12px;top:40px;width:569px;height:20px"></div>
<div class="a t13" style="left:14px;top:42px">Stolarze</div>
<div class="a t13" style="left:114px;top:42px">jk</div>
<div class="a t13" style="left:214px;top:42px">Pracownik 1</div>
<div class="a t13" style="left:314px;top:42px">Pracownik 1</div>
<div class="a t13" style="right:101px;top:42px">8</div>
<div class="a t13" style="right:31px;top:42px">18,00</div>
<div class="a ind" style="left:0;top:60px;width:12px;height:20px"></div>
<div class="a r1" style="left:12px;top:60px;width:569px;height:20px"></div>
<div class="a t13" style="left:14px;top:62px">Krawcowie</div>
<div class="a t13" style="left:114px;top:62px;transform:scaleX(.89);transform-origin:0 0">BP</div>
<div class="a t13" style="left:214px;top:62px">Pracownik 10</div>
<div class="a t13" style="left:314px;top:62px">Pracownik 10</div>
<div class="a t13" style="right:101px;top:62px">8</div>
<div class="a t13" style="right:31px;top:62px">15,00</div>
<div class="a ind" style="left:0;top:80px;width:12px;height:20px"></div>
<div class="a r0" style="left:12px;top:80px;width:569px;height:20px"></div>
<div class="a t13" style="left:14px;top:82px">Stolarze</div>
<div class="a t13" style="left:114px;top:82px;transform:scaleX(.89);transform-origin:0 0">BM</div>
<div class="a t13" style="left:214px;top:82px">Pracownik 11</div>
<div class="a t13" style="left:314px;top:82px">Pracownik 11</div>
<div class="a t13" style="right:101px;top:82px">8</div>
<div class="a t13" style="right:31px;top:82px">18,00</div>
<div class="a ind" style="left:0;top:100px;width:12px;height:20px"></div>
<div class="a r1" style="left:12px;top:100px;width:569px;height:20px"></div>
<div class="a t13" style="left:14px;top:102px">Stolarze</div>
<div class="a t13" style="left:114px;top:102px;transform:scaleX(.89);transform-origin:0 0">BS</div>
<div class="a t13" style="left:214px;top:102px">Pracownik 12</div>
<div class="a t13" style="left:314px;top:102px">Pracownik 12</div>
<div class="a t13" style="right:101px;top:102px">8</div>
<div class="a t13" style="right:31px;top:102px">19,00</div>
<div class="a ind" style="left:0;top:120px;width:12px;height:20px"></div>
<div class="a r0" style="left:12px;top:120px;width:569px;height:20px"></div>
<div class="a t13" style="left:14px;top:122px">Kadra</div>
<div class="a t13" style="left:114px;top:122px;transform:scaleX(.89);transform-origin:0 0">CB</div>
<div class="a t13" style="left:214px;top:122px">Pracownik 13</div>
<div class="a t13" style="left:314px;top:122px">Pracownik 13</div>
<div class="a t13" style="right:101px;top:122px">8</div>
<div class="a t13" style="right:31px;top:122px">21,00</div>
<div class="a ind" style="left:0;top:140px;width:12px;height:20px"></div>
<div class="a r1" style="left:12px;top:140px;width:569px;height:20px"></div>
<div class="a t13" style="left:14px;top:142px">Kadra</div>
<div class="a t13" style="left:114px;top:142px;transform:scaleX(.89);transform-origin:0 0">DT</div>
<div class="a t13" style="left:214px;top:142px">Pracownik 14</div>
<div class="a t13" style="left:314px;top:142px">Pracownik 14</div>
<div class="a t13" style="right:101px;top:142px">8</div>
<div class="a t13" style="right:31px;top:142px">34,00</div>
<div class="a ind" style="left:0;top:160px;width:12px;height:20px"></div>
<div class="a r0" style="left:12px;top:160px;width:569px;height:20px"></div>
<div class="a t13" style="left:14px;top:162px">Stolarze</div>
<div class="a t13" style="left:114px;top:162px;transform:scaleX(.89);transform-origin:0 0">EK</div>
<div class="a t13" style="left:214px;top:162px">Pracownik 15</div>
<div class="a t13" style="left:314px;top:162px">Pracownik 15</div>
<div class="a t13" style="right:101px;top:162px">8</div>
<div class="a t13" style="right:31px;top:162px">25,00</div>
<div class="a ind" style="left:0;top:180px;width:12px;height:20px"></div>
<div class="a r1" style="left:12px;top:180px;width:569px;height:20px"></div>
<div class="a t13" style="left:14px;top:182px">Kadra</div>
<div class="a t13" style="left:114px;top:182px;transform:scaleX(.89);transform-origin:0 0">EL</div>
<div class="a t13" style="left:214px;top:182px">Pracownik 16</div>
<div class="a t13" style="left:314px;top:182px">Pracownik 16</div>
<div class="a t13" style="right:101px;top:182px">8</div>
<div class="a t13" style="right:31px;top:182px">24,00</div>
<div class="a ind" style="left:0;top:200px;width:12px;height:20px"></div>
<div class="a r0" style="left:12px;top:200px;width:569px;height:20px"></div>
<div class="a t13" style="left:14px;top:202px">Kadra</div>
<div class="a t13" style="left:114px;top:202px;transform:scaleX(.89);transform-origin:0 0">EW</div>
<div class="a t13" style="left:214px;top:202px">Pracownik 17</div>
<div class="a t13" style="left:314px;top:202px">Pracownik 17</div>
<div class="a t13" style="right:101px;top:202px">8</div>
<div class="a t13" style="right:31px;top:202px">19,00</div>
<div class="a ind" style="left:0;top:220px;width:12px;height:20px"></div>
<div class="a r1" style="left:12px;top:220px;width:569px;height:20px"></div>
<div class="a t13" style="left:14px;top:222px">Stolarze</div>
<div class="a t13" style="left:114px;top:222px;transform:scaleX(.89);transform-origin:0 0">FB</div>
<div class="a t13" style="left:214px;top:222px">Pracownik 18</div>
<div class="a t13" style="left:314px;top:222px">Pracownik 18</div>
<div class="a t13" style="right:101px;top:222px">8</div>
<div class="a t13" style="right:31px;top:222px">34,00</div>
<div class="a ind" style="left:0;top:240px;width:12px;height:20px"></div>
<div class="a r0" style="left:12px;top:240px;width:569px;height:20px"></div>
<div class="a t13" style="left:14px;top:242px">Kadra</div>
<div class="a t13" style="left:114px;top:242px;transform:scaleX(.89);transform-origin:0 0">IZ</div>
<div class="a t13" style="left:214px;top:242px">Pracownik 19</div>
<div class="a t13" style="left:314px;top:242px">Pracownik 19</div>
<div class="a t13" style="right:101px;top:242px">8</div>
<div class="a t13" style="right:31px;top:242px">35,00</div>
<div class="a ind" style="left:0;top:260px;width:12px;height:20px"></div>
<div class="a r1" style="left:12px;top:260px;width:569px;height:20px"></div>
<div class="a t13" style="left:14px;top:262px">Kadra</div>
<div class="a t13" style="left:114px;top:262px">an</div>
<div class="a t13" style="left:214px;top:262px">Pracownik 2</div>
<div class="a t13" style="left:314px;top:262px">Pracownik 2</div>
<div class="a t13" style="right:101px;top:262px">8</div>
<div class="a t13" style="right:31px;top:262px">19,00</div>
<div class="a" style="left:12px;top:40px;width:569px;height:20px;border-top:1px dotted #111;border-bottom:1px dotted #111"></div>
<svg style="left:4px;top:46px" width="4" height="7"><path d="M0 0l4 3.500-4 3.500z" fill="#111"/></svg>
</div>
<div class="a " style="left:201px;top:494px;width:581px;height:36px;background:linear-gradient(#eef0f4 0,#e7eaf0 50%,#dde1ea 53%,#dadee8 100%);border-top:1px solid #c5cbd9"></div>
<div class="a cnt" style="left:215px;top:497px;width:96px;height:30px;padding:7px 0 0 10px">31 rekordów</div>
<div class="a cnt" style="left:316px;top:497px;width:95px;height:30px;padding:7px 0 0 10px">31 pozycji</div>
<div class="a sb" style="left:782px;top:144px;width:16px;height:386px;"></div>
<svg style="left:786px;top:150px" width="7" height="4" viewBox="0 0 7 4"><path d="M0 4l3.500-4 3.500 4z" fill="#9aa2b6"/></svg>
<svg style="left:786px;top:520px" width="7" height="4" viewBox="0 0 7 4"><path d="M0 0l3.500 4 3.500-4z" fill="#9aa2b6"/></svg>
<div class="a thumbv" style="left:783px;top:161px;width:14px;height:147px;"></div>
<div class="a " style="left:786px;top:232px;width:8px;height:1px;background:#5d6680"></div>
<div class="a " style="left:786px;top:234px;width:8px;height:1px;background:#5d6680"></div>
<div class="a " style="left:786px;top:236px;width:8px;height:1px;background:#5d6680"></div>
<div class="a " style="left:786px;top:238px;width:8px;height:1px;background:#5d6680"></div>
<div class="a sb" style="left:201px;top:530px;width:581px;height:16px;"></div>
<svg style="left:206px;top:535px" width="4" height="7" viewBox="0 0 4 7"><path d="M4 0l-4 3.500 4 3.500z" fill="#9aa2b6"/></svg>
<svg style="left:771px;top:535px" width="4" height="7" viewBox="0 0 4 7"><path d="M0 0l4 3.500-4 3.500z" fill="#9aa2b6"/></svg>
<div class="a thumb" style="left:218px;top:531px;width:339px;height:14px;"></div>
<div class="a " style="left:384px;top:535px;width:1px;height:7px;background:#5d6680"></div>
<div class="a " style="left:386px;top:535px;width:1px;height:7px;background:#5d6680"></div>
<div class="a " style="left:388px;top:535px;width:1px;height:7px;background:#5d6680"></div>
<div class="a " style="left:201px;top:548px;width:597px;height:15px;border:1px solid #b9ad8a;border-radius:2px;background:linear-gradient(#fffbee 0,#fff4d9 50%,#fde5a2 56%,#fde5a2 100%)"></div>
<div class="a " style="left:299.0px;width:400px;text-align:center;top:549px;font-size:11px;line-height:13px;letter-spacing:2.2px;color:#1e2233">UKRYJ SZCZEGÓŁY [F8]</div>
<div class="a " style="left:493px;top:567px;width:2px;height:2px;background:#8f99b3"></div>
<div class="a " style="left:497px;top:567px;width:2px;height:2px;background:#8f99b3"></div>
<div class="a " style="left:501px;top:567px;width:2px;height:2px;background:#8f99b3"></div>
<div class="a " style="left:505px;top:567px;width:2px;height:2px;background:#8f99b3"></div>
<div class="a " style="left:800px;top:427px;width:2px;height:2px;background:#7b86a8"></div>
<div class="a " style="left:800px;top:431px;width:2px;height:2px;background:#7b86a8"></div>
<div class="a " style="left:800px;top:435px;width:2px;height:2px;background:#7b86a8"></div>
<div class="a " style="left:800px;top:439px;width:2px;height:2px;background:#7b86a8"></div>
<div class="a tab" style="left:205px;top:572px;width:135px;height:24px;"></div>
<svg style="left:222px;top:575px" width="16" height="16" viewBox="0 0 16 16"><path d="M1 2.500h8.500v-2.300l6 4.800-6 4.800v-2.300h-8.500z" fill="#f29a2e" stroke="#c0681c" stroke-width=".7" stroke-linejoin="round"/><path d="M15 8.500h-8.500v-2.300l-6 4.800 6 4.800v-2.300h8.500z" fill="#49b23a" stroke="#2a7e1e" stroke-width=".7" stroke-linejoin="round"/><rect x="4.500" y="5.500" width="7.500" height="5" fill="#7cd05a" stroke="#2a7e1e" stroke-width=".6"/></svg>
<div class="a t11" style="left:244px;top:579px;color:#1e2233;transform:scaleX(0.98);transform-origin:0 0">Grupy akordowe</div>
<div class="a tab" style="left:342px;top:572px;width:104px;height:24px;"></div>
<svg style="left:356px;top:575px" width="16" height="16" viewBox="0 0 16 16"><rect width="16" height="16" fill="#c9ccd6"/><path d="M4.500 2l10-1-3 10-10 1.500z" fill="#e0382c" stroke="#9a1c16" stroke-width=".6"/><path d="M5.500 4.500l7-.8-1.800 6-7 .9z" fill="#fbeaea"/><path d="M5 6l6.500-.8M4.500 8l6.500-.8M7 4.500l-1.300 5M9.500 4.200l-1.300 5" stroke="#d87870" stroke-width=".5"/><circle cx="3" cy="13.500" r="1.800" fill="#f0f0f0" stroke="#555" stroke-width=".5"/><circle cx="10" cy="13" r="1.800" fill="#f0f0f0" stroke="#555" stroke-width=".5"/></svg>
<div class="a t11" style="left:377px;top:579px;color:#1e2233">Informacje</div>
<div class="a tab" style="left:447px;top:572px;width:162px;height:24px;"></div>
<svg style="left:465px;top:575px" width="16" height="16" viewBox="0 0 16 16"><rect width="16" height="16" fill="#d4d7e0"/><path d="M1 3.500h5.500v2.500h-1.800v9.500h-2v-9.500h-1.700z" fill="#d8322a" stroke="#8a1a14" stroke-width=".4"/><path d="M1 2.500h5.500" stroke="#9aa0ac" stroke-width="1.500"/><circle cx="11" cy="5" r="3" fill="#f3c79a" stroke="#a8702c" stroke-width=".5"/><path d="M8 4q0-3 3-3t3 3q-1.500-1-3-1t-3 1z" fill="#e8b03a"/><path d="M6.500 15.500q0-6 4.500-6t4.500 6z" fill="#3b3f4c" stroke="#222" stroke-width=".4"/><path d="M9.800 9.500l1.200 5 1.200-5z" fill="#fff"/></svg>
<div class="a t11" style="left:487px;top:579px;color:#1e2233;transform:scaleX(0.95);transform-origin:0 0">Wydania pracownicze</div>
<div class="a tab" style="left:611px;top:572px;width:96px;height:24px;"></div>
<svg style="left:627px;top:576px" width="10" height="14" viewBox="0 0 10 14"><path d="M2.500 4v6.500q0 2.500 2.500 2.500t2.500-2.500v-7.500q0-2-1.800-2t-1.800 2v7q0 1 1 1t1-1v-5.500" fill="none" stroke="#a9adb8" stroke-width="1.500" stroke-linecap="round"/></svg>
<div class="a t11" style="left:647px;top:579px;color:#1e2233;transform:scaleX(0.93);transform-origin:0 0">Załączniki</div>
<div class="a tab" style="left:709px;top:572px;width:85px;height:24px;"></div>
<svg style="left:723px;top:577px" width="16" height="13" viewBox="0 0 16 13"><rect x=".500" y=".500" width="15" height="12" rx="1" fill="#fdfdfd" stroke="#9a8a6a" stroke-width="1"/><rect x="2.500" y="2.500" width="11" height="8" fill="#7fb8e8"/><path d="M2.500 10.500l3.500-4 2.500 2.500 2-2 3 3.500z" fill="#4f9a3a"/><circle cx="8" cy="5.500" r="2" fill="#f0a020"/><circle cx="10" cy="6.500" r="1.500" fill="#e8402a"/></svg>
<div class="a t11" style="left:746px;top:579px;color:#1e2233;transform:scaleX(0.95);transform-origin:0 0">Zdjęcia</div>
<div class="a tabA" style="left:205px;top:597px;width:105px;height:26px;"></div>
<svg style="left:227px;top:602px" width="16" height="16" viewBox="0 0 16 16"><circle cx="8" cy="8" r="7.300" fill="#f6f8fc" stroke="#6e84bc" stroke-width=".9"/><path d="M3.500 11.500a5.500 5.500 0 1 1 9 0" fill="none" stroke="#a9c8f2" stroke-width="1.600"/><path d="M12.300 5a5.500 5.500 0 0 1 .6 5.500" stroke="#e8503a" stroke-width="1.700" fill="none"/><path d="M7.800 8.200l4-4.700" stroke="#1a1a22" stroke-width="1"/><circle cx="7.800" cy="8.200" r="1.400" fill="#22283c"/></svg>
<div class="a t11" style="left:249px;top:605px;color:#1e2233">Obiekty</div>
<div class="a tab" style="left:310px;top:598px;width:204px;height:24px;"></div>
<svg style="left:344px;top:602px" width="17" height="15" viewBox="0 0 17 15"><path d="M3.500 3.500v-2h5v2" fill="none" stroke="#6a3a12" stroke-width="1.200"/><rect x=".500" y="3.500" width="11" height="8" rx="1" fill="#b8641e" stroke="#6a3a12" stroke-width=".8"/><rect x=".500" y="6" width="11" height="1.500" fill="#8a4a14"/><rect x="6.500" y="7.500" width="10" height="7" rx="1" fill="url(#gOrange)" stroke="#a8681a" stroke-width=".8"/><rect x="6.500" y="9.500" width="10" height="1.300" fill="#fbe0a8"/><path d="M9.500 7.500v-1.500h4v1.500" fill="none" stroke="#a8681a" stroke-width="1"/></svg>
<div class="a t11" style="left:365px;top:605px;color:#1e2233;transform:scaleX(0.975);transform-origin:0 0">Uprawnienia zawodowe</div>
<div class="a tab" style="left:515px;top:598px;width:113px;height:24px;"></div>
<svg style="left:538px;top:602px" width="16" height="16" viewBox="0 0 16 16"><rect x=".500" y="1.500" width="12" height="10" fill="#fff" stroke="#6a4a5a" stroke-width="1"/><path d="M3.500 .500v4M6.500 .500v4M9.500 .500v4" stroke="#6a4a5a" stroke-width="1"/><circle cx="11" cy="11" r="4.300" fill="#fff" stroke="#d8322a" stroke-width="1.500"/><path d="M11 8.800v2.400h2" fill="none" stroke="#333" stroke-width=".9"/></svg>
<div class="a t11" style="left:559px;top:605px;color:#1e2233;transform:scaleX(0.925);transform-origin:0 0">Szkolenia</div>
<div class="a tab" style="left:629px;top:598px;width:165px;height:24px;"></div>
<svg style="left:659px;top:602px" width="17" height="15" viewBox="0 0 17 15"><circle cx="3.500" cy="8" r="3" fill="#e8eef8" stroke="#4a5a7c" stroke-width="1.200"/><circle cx="9" cy="8" r="3" fill="#e8eef8" stroke="#4a5a7c" stroke-width="1.200"/><path d="M2 5.500l1-4h2l.5 3.500M7.500 5l.5-3.500h2l1 4" fill="#6a7a9c" stroke="#4a5a7c" stroke-width=".7"/><circle cx="13" cy="8" r="2.200" fill="#f0c08a" stroke="#a8702c" stroke-width=".5"/><path d="M9.500 14.500q0-4 3.500-4t3.500 4z" fill="#e8a02a" stroke="#a8681a" stroke-width=".5"/><path d="M11 7q0-2.500 2-2.500t2 2.500" fill="#58a83a"/></svg>
<div class="a t11" style="left:680px;top:605px;color:#1e2233;transform:scaleX(0.95);transform-origin:0 0">Badania lekarskie</div>
<div class="a yl" style="left:201px;top:622px;width:597px;height:5px;border-radius:2px 2px 0 0"></div>
<div class="a yl" style="left:201px;top:769px;width:597px;height:4px;border-radius:0 0 2px 2px;box-shadow:0 1px 0 #9ba7c1"></div>
<div class="a " style="left:201px;top:625px;width:1px;height:146px;background:#9ba7c1"></div>
<div class="a " style="left:797px;top:625px;width:1px;height:146px;background:#9ba7c1"></div>
<svg style="left:211px;top:634px" width="16" height="16" viewBox="0 0 16 16"><path d="M5.600 .600h4.800v5h5v4.800h-5v5h-4.800v-5h-5v-4.800h5z" fill="none" stroke="#e4ebf7" stroke-width="2.200" stroke-linejoin="round" opacity=".35"/><path d="M5.600 .600h4.800v5h5v4.800h-5v5h-4.800v-5h-5v-4.800h5z" fill="url(#gPlus)" stroke="#2257b8" stroke-width="1.100" stroke-linejoin="round"/><path d="M6.600 6.600v-5h2.800M1.600 9.400v-2.800h5M6.600 14.400v-4" fill="none" stroke="#a9cdf9" stroke-width=".9" opacity=".9"/><path d="M10.500 6.600h3.900" fill="none" stroke="#a9cdf9" stroke-width=".9" opacity=".9"/></svg>
<svg style="left:211px;top:663px" width="16" height="16" viewBox="0 0 16 16"><path d="M3 3.500h6.500l3 3v9h-11v-10.500q0-1.500 1.500-1.500z" fill="#fdfdfe" stroke="#aeb4c2" stroke-width="1" stroke-linejoin="round"/><path d="M12.500 15.500l-3-.5 3-2.500z" fill="#d5d9e2"/><path d="M3.800 13.200l1.200-3.600 7.600-7.600 2.400 2.400-7.600 7.600z" fill="#3c8ae6" stroke="#1a4a9a" stroke-width=".8" stroke-linejoin="round"/><path d="M3.800 13.200l1.200-3.600 2.400 2.400z" fill="#f0d8b0" stroke="#222" stroke-width=".6"/><path d="M3.800 13.200l.5-1.500 1 1z" fill="#111"/><path d="M11.400 3.200l2.400 2.400" stroke="#9cc4f4" stroke-width="1.200"/></svg>
<svg style="left:212px;top:692px" width="13" height="12.0" viewBox="0 0 13 12"><path d="M1 3l2.200-2.200 3.300 3 3.300-3 2.200 2.200-3.200 3 3.200 3-2.200 2.200-3.300-3-3.300 3-2.200-2.200 3.200-3z" fill="#46a2de" stroke="#8fcbee" stroke-width=".9" stroke-linejoin="round"/></svg>
<svg style="left:208px;top:721px" width="16" height="16" viewBox="0 0 16 16"><path d="M0 .500h3M1.500 .500v11.500M0 12h3" stroke="#0f1c4c" stroke-width="1.100" fill="none"/><rect x="4.500" y=".500" width="10" height="11" fill="#e9eef8" stroke="#b9c9ea" stroke-width="1"/><path d="M14.500 1v10.500h-9.500" fill="none" stroke="#6f98d6" stroke-width=".9"/><path d="M4.500 14.500h10.500M4.500 13v3M15 13v3" stroke="#0f1c4c" stroke-width="1.100" fill="none"/></svg>
<div class="a ghead2" style="left:235px;top:628px;width:530px;height:21px;"></div>
<svg style="left:237px;top:635px" width="7" height="7" viewBox="0 0 7 7"><path d="M3.500 0v7M0 3.500h7M1 1l5 5M6 1l-5 5" stroke="#15151c" stroke-width=".8"/><circle cx="3.500" cy="3.500" r="1" fill="#f2f3f7"/></svg>
<div class="a hd" style="left:249px;top:631px;">Obiekt</div>
<div class="a hd" style="left:399px;top:631px;">Uwagi</div>
<div class="a hd" style="left:699px;top:631px;width:66px;overflow:hidden">Powiadamiaj</div>
<div class="a " style="left:396px;top:630px;width:2px;height:18px;border-left:1px solid #ccd1de;border-right:1px solid #eef0f5"></div>
<div class="a " style="left:696px;top:630px;width:2px;height:18px;border-left:1px solid #ccd1de;border-right:1px solid #eef0f5"></div>
<div class="a " style="left:235px;top:649px;width:12px;height:21px;background:#e4e7ee"></div>
<svg style="left:238px;top:658px" width="5" height="8" viewBox="0 0 5 8"><ellipse cx="2.500" cy="2.200" rx="2.300" ry="2" fill="#1c1c24"/><circle cx="3" cy="1.800" r=".6" fill="#f0f0f4"/><path d="M2.500 4v3.500" stroke="#1c1c24" stroke-width="1.200"/></svg>
<div class="a " style="left:247px;top:649px;width:518px;height:21px;background:#ebf5ea"></div>
<div class="a flt" style="left:356.0px;width:300px;text-align:center;top:652px;">kliknij aby dodać filtr</div>
<div class="a gsep" style="left:235px;top:670px;width:530px;height:2px;"></div>
<div class="a ind" style="left:235px;top:672px;width:12px;height:20px;"></div>
<div class="a rfoc" style="left:247px;top:672px;width:518px;height:20px;"></div>
<svg style="left:239px;top:678px" width="4" height="7" viewBox="0 0 4 7"><path d="M0 0l4 3.500-4 3.500z" fill="#111"/></svg>
<div class="a t13" style="left:249px;top:674px;transform:scaleX(.88);transform-origin:0 0">CNC</div>
<div class="a cb" style="left:739px;top:675px;width:15px;height:14px;"></div>
<svg style="left:740px;top:676px" width="13" height="12" viewBox="0 0 13 12"><path d="M2 6l3 4.500 6.500-9.500" fill="none" stroke="#111" stroke-width="2"/></svg>
<div class="a " style="left:235px;top:692px;width:530px;height:60px;background:#fff"></div>
<div class="a sb" style="left:235px;top:752px;width:530px;height:15px;"></div>
<svg style="left:241px;top:756px" width="4" height="7" viewBox="0 0 4 7"><path d="M4 0l-4 3.500 4 3.500z" fill="#9aa2b6"/></svg>
<svg style="left:754px;top:756px" width="4" height="7" viewBox="0 0 4 7"><path d="M0 0l4 3.500-4 3.500z" fill="#9aa2b6"/></svg>
<div class="a thumb" style="left:252px;top:753px;width:394px;height:13px;"></div>
<div class="a " style="left:446px;top:756px;width:1px;height:7px;background:#5d6680"></div>
<div class="a " style="left:448px;top:756px;width:1px;height:7px;background:#5d6680"></div>
<div class="a " style="left:450px;top:756px;width:1px;height:7px;background:#5d6680"></div>
<svg style="left:774px;top:634px" width="16" height="15" viewBox="0 0 16 15"><path d="M7 2.5h7.500" stroke="#fff" stroke-width="3" stroke-linecap="round" opacity=".9"/><circle cx="2.200" cy="2.5" r="1.350" fill="#f2f8ff" stroke="#2f78d0" stroke-width=".9"/><path d="M6.300 2.5h8.400" stroke="#2a3450" stroke-width="1.400"/><path d="M7 7.5h7.500" stroke="#fff" stroke-width="3" stroke-linecap="round" opacity=".9"/><circle cx="2.200" cy="7.5" r="1.350" fill="#f2f8ff" stroke="#2f78d0" stroke-width=".9"/><path d="M6.300 7.5h8.400" stroke="#2a3450" stroke-width="1.400"/><path d="M7 12.5h7.500" stroke="#fff" stroke-width="3" stroke-linecap="round" opacity=".9"/><circle cx="2.200" cy="12.5" r="1.350" fill="#f2f8ff" stroke="#2f78d0" stroke-width=".9"/><path d="M6.300 12.5h8.400" stroke="#2a3450" stroke-width="1.400"/></svg>
<div class="a " style="left:493px;top:777px;width:2px;height:2px;background:#8f99b3"></div>
<div class="a " style="left:497px;top:777px;width:2px;height:2px;background:#8f99b3"></div>
<div class="a " style="left:501px;top:777px;width:2px;height:2px;background:#8f99b3"></div>
<div class="a " style="left:505px;top:777px;width:2px;height:2px;background:#8f99b3"></div>
<div class="a " style="left:493px;top:781px;width:2px;height:2px;background:#8f99b3"></div>
<div class="a " style="left:497px;top:781px;width:2px;height:2px;background:#8f99b3"></div>
<div class="a " style="left:501px;top:781px;width:2px;height:2px;background:#8f99b3"></div>
<div class="a " style="left:505px;top:781px;width:2px;height:2px;background:#8f99b3"></div>
<div class="a tabA" style="left:808px;top:84px;width:113px;height:26px;"></div>
<div class="a t11" style="left:816px;top:91px;color:#1e2233">Grupy pracowników</div>
<div class="a tab" style="left:922px;top:85px;width:95px;height:25px;"></div>
<div class="a t11" style="left:928px;top:91px;color:#1e2233">Grupy akordowe</div>
<div class="a yl" style="left:805px;top:109px;width:489px;height:4px;border-radius:2px 2px 0 0"></div>
<div class="a yl" style="left:805px;top:781px;width:489px;height:4px;border-radius:0 0 2px 2px;box-shadow:0 1px 0 #9ba7c1"></div>
<div class="a " style="left:804px;top:112px;width:1px;height:672px;background:#96a3bf"></div>
<div class="a " style="left:805px;top:113px;width:1px;height:670px;background:#aab5cc"></div>
<div class="a " style="left:1293px;top:110px;width:1px;height:674px;background:#a9b3ca"></div>
<div class="a lbl" style="left:817px;top:129px;width:141px;height:15px;"></div>
<div class="a t11" style="left:822px;top:131px;;transform:scaleX(0.905);transform-origin:0 0"><b>·</b> GRUPY PRACOWNIKÓW <b>·</b></div>
<svg style="left:827px;top:150px" width="16" height="16" viewBox="0 0 16 16"><path d="M5.600 .600h4.800v5h5v4.800h-5v5h-4.800v-5h-5v-4.800h5z" fill="none" stroke="#e4ebf7" stroke-width="2.200" stroke-linejoin="round" opacity=".35"/><path d="M5.600 .600h4.800v5h5v4.800h-5v5h-4.800v-5h-5v-4.800h5z" fill="url(#gPlus)" stroke="#2257b8" stroke-width="1.100" stroke-linejoin="round"/><path d="M6.600 6.600v-5h2.800M1.600 9.400v-2.800h5M6.600 14.400v-4" fill="none" stroke="#a9cdf9" stroke-width=".9" opacity=".9"/><path d="M10.500 6.600h3.900" fill="none" stroke="#a9cdf9" stroke-width=".9" opacity=".9"/></svg>
<svg style="left:865px;top:150px" width="16" height="16" viewBox="0 0 16 16"><path d="M3 3.500h6.500l3 3v9h-11v-10.500q0-1.500 1.500-1.500z" fill="#fdfdfe" stroke="#aeb4c2" stroke-width="1" stroke-linejoin="round"/><path d="M12.500 15.500l-3-.5 3-2.500z" fill="#d5d9e2"/><path d="M3.800 13.200l1.200-3.600 7.600-7.600 2.400 2.400-7.600 7.600z" fill="#3c8ae6" stroke="#1a4a9a" stroke-width=".8" stroke-linejoin="round"/><path d="M3.800 13.200l1.200-3.600 2.400 2.400z" fill="#f0d8b0" stroke="#222" stroke-width=".6"/><path d="M3.800 13.200l.5-1.500 1 1z" fill="#111"/><path d="M11.400 3.200l2.400 2.400" stroke="#9cc4f4" stroke-width="1.200"/></svg>
<svg style="left:903px;top:150px" width="16" height="16" viewBox="0 0 16 16"><path d="M.500 .500h6.500l2.500 2.500v7.500h-9z" fill="#fbfcfe" stroke="#7f8da8" stroke-width="1"/><path d="M2 4.500h5M2 6.500h3" stroke="#8da3cc" stroke-width="1"/><path d="M5.500 4.500h6.500l3 3v8h-9.500z" fill="#fff" stroke="#44546f" stroke-width="1"/><path d="M12 4.500v3h3" fill="none" stroke="#44546f" stroke-width=".8"/><path d="M7.500 9.500h5.500M7.500 11.500h5.500M7.500 13.500h5.500" stroke="#7e97c4" stroke-width="1"/></svg>
<svg style="left:943px;top:152px" width="13" height="12.0" viewBox="0 0 13 12"><path d="M1 3l2.200-2.200 3.300 3 3.300-3 2.200 2.200-3.200 3 3.200 3-2.200 2.200-3.300-3-3.300 3-2.200-2.200 3.200-3z" fill="#46a2de" stroke="#8fcbee" stroke-width=".9" stroke-linejoin="round"/></svg>
<svg style="left:984px;top:151px" width="14" height="12" viewBox="0 0 14 12"><ellipse cx="4.500" cy="10" rx="3.800" ry="1.700" fill="url(#gGold)" stroke="#e0b64e" stroke-width=".6"/><ellipse cx="4.500" cy="8" rx="3.800" ry="1.700" fill="url(#gGold)" stroke="#e0b64e" stroke-width=".6"/><ellipse cx="4.500" cy="6" rx="3.800" ry="1.700" fill="url(#gGold)" stroke="#e0b64e" stroke-width=".6"/><ellipse cx="4.500" cy="4" rx="3.800" ry="1.700" fill="url(#gGold)" stroke="#e0b64e" stroke-width=".6"/><ellipse cx="4.500" cy="2" rx="3.800" ry="1.700" fill="url(#gGold)" stroke="#e0b64e" stroke-width=".6"/><ellipse cx="10.200" cy="10" rx="3.300" ry="1.600" fill="url(#gGold)" stroke="#e0b64e" stroke-width=".6"/><ellipse cx="10.200" cy="8" rx="3.300" ry="1.600" fill="url(#gGold)" stroke="#e0b64e" stroke-width=".6"/><ellipse cx="10.200" cy="6" rx="3.300" ry="1.600" fill="url(#gGold)" stroke="#e0b64e" stroke-width=".6"/></svg>
<div class="a " style="left:794.5px;width:80px;text-align:center;top:169px;font-size:11px;line-height:13px;color:#1e2233;transform:scaleX(0.89)">Dodaj</div>
<div class="a " style="left:833.0px;width:80px;text-align:center;top:169px;font-size:11px;line-height:13px;color:#1e2233;transform:scaleX(0.89)">Edytuj</div>
<div class="a " style="left:871.0px;width:80px;text-align:center;top:169px;font-size:11px;line-height:13px;color:#1e2233;transform:scaleX(0.89)">Klonuj</div>
<div class="a " style="left:909.0px;width:80px;text-align:center;top:169px;font-size:11px;line-height:13px;color:#1e2233;transform:scaleX(0.89)">Usuń</div>
<div class="a " style="left:950.5px;width:80px;text-align:center;top:169px;font-size:11px;line-height:13px;color:#1e2233;transform:scaleX(0.91)">Rozlicz</div>
<svg style="left:1191px;top:157px" width="16" height="16" viewBox="0 0 16 16"><path d="M0 .500h3M1.500 .500v11.500M0 12h3" stroke="#0f1c4c" stroke-width="1.100" fill="none"/><rect x="4.500" y=".500" width="10" height="11" fill="#e9eef8" stroke="#b9c9ea" stroke-width="1"/><path d="M14.500 1v10.500h-9.500" fill="none" stroke="#6f98d6" stroke-width=".9"/><path d="M4.500 14.500h10.500M4.500 13v3M15 13v3" stroke="#0f1c4c" stroke-width="1.100" fill="none"/></svg>
<svg style="left:1226px;top:158px" width="16" height="16" viewBox="0 0 16 16"><path d="M7.800 .200q-5.300 1.300-5.600 6l-2.200-.5 4.300 6.300 3.700-6.700-2.300.900q.2-3.500 2.100-6z" fill="#3f9ae6"/><path d="M7.800 .200q-5.300 1.300-5.600 6" fill="none" stroke="#9fd0f6" stroke-width=".6"/><path d="M8.300 15.800q5.300-1.300 5.600-6l2.200.5-4.300-6.300-3.700 6.700 2.300-.900q-.2 3.500-2.100 6z" fill="#1f6fd0"/></svg>
<svg style="left:1259px;top:158.5px" width="16" height="15" viewBox="0 0 16 15"><path d="M7 2.5h7.500" stroke="#fff" stroke-width="3" stroke-linecap="round" opacity=".9"/><circle cx="2.200" cy="2.5" r="1.350" fill="#f2f8ff" stroke="#2f78d0" stroke-width=".9"/><path d="M6.300 2.5h8.400" stroke="#2a3450" stroke-width="1.400"/><path d="M7 7.5h7.500" stroke="#fff" stroke-width="3" stroke-linecap="round" opacity=".9"/><circle cx="2.200" cy="7.5" r="1.350" fill="#f2f8ff" stroke="#2f78d0" stroke-width=".9"/><path d="M6.300 7.5h8.400" stroke="#2a3450" stroke-width="1.400"/><path d="M7 12.5h7.500" stroke="#fff" stroke-width="3" stroke-linecap="round" opacity=".9"/><circle cx="2.200" cy="12.5" r="1.350" fill="#f2f8ff" stroke="#2f78d0" stroke-width=".9"/><path d="M6.300 12.5h8.400" stroke="#2a3450" stroke-width="1.400"/></svg>
<div class="a " style="left:816px;top:185px;width:466px;height:38px;background:#c8d1e3"></div>
<div class="a " style="left:824px;top:197px;font-size:13px;line-height:16px;color:#a3adc4">Panel grupowania</div>
<div class="a " style="left:816px;top:223px;width:466px;height:314px;background:#fff;border-top:1px solid #b3bbcf"></div>
<div class="a ghead" style="left:816px;top:223px;width:357px;height:22px;"></div>
<svg style="left:818px;top:231px" width="7" height="7" viewBox="0 0 7 7"><path d="M3.500 0v7M0 3.500h7M1 1l5 5M6 1l-5 5" stroke="#15151c" stroke-width=".8"/><circle cx="3.500" cy="3.500" r="1" fill="#f2f3f7"/></svg>
<div class="a hd" style="left:830px;top:227px;">Kod</div>
<div class="a hd" style="left:930px;top:227px;">Ilość pra...</div>
<div class="a hd" style="left:1000px;top:227px;">Łączny cza...</div>
<div class="a hd" style="left:1079px;top:227px;">Średnia stawka</div>
<div class="a " style="left:927px;top:225px;width:2px;height:19px;border-left:1px solid #ccd1de;border-right:1px solid #eef0f5"></div>
<div class="a " style="left:997px;top:225px;width:2px;height:19px;border-left:1px solid #ccd1de;border-right:1px solid #eef0f5"></div>
<div class="a " style="left:1076px;top:225px;width:2px;height:19px;border-left:1px solid #ccd1de;border-right:1px solid #eef0f5"></div>
<svg style="left:912px;top:232px" width="9" height="5" viewBox="0 0 9 5"><path d="M0 5l4.500-5 4.500 5z" fill="#a5adc2"/></svg>
<div class="a " style="left:816px;top:245px;width:12px;height:20px;background:#e4e7ee"></div>
<svg style="left:820px;top:252px" width="5" height="8" viewBox="0 0 5 8"><ellipse cx="2.500" cy="2.200" rx="2.300" ry="2" fill="#1c1c24"/><circle cx="3" cy="1.800" r=".6" fill="#f0f0f4"/><path d="M2.500 4v3.500" stroke="#1c1c24" stroke-width="1.200"/></svg>
<div class="a " style="left:828px;top:245px;width:345px;height:20px;background:#ebf5ea"></div>
<div class="a flt" style="left:850.0px;width:300px;text-align:center;top:247px;">kliknij aby dodać filtr</div>
<div class="a gsep" style="left:816px;top:265px;width:357px;height:2px;"></div>
<div class="a ind" style="left:816px;top:267px;width:12px;height:20px;"></div>
<div class="a rfoc" style="left:828px;top:267px;width:345px;height:20px;"></div>
<div class="a t13" style="left:830px;top:269px;">Kadra</div>
<div class="a t13" style="right:309px;top:269px;">11</div>
<div class="a t13" style="right:229px;top:269px;">88</div>
<div class="a t13" style="right:133px;top:269px;">25,72</div>
<div class="a ind" style="left:816px;top:287px;width:12px;height:20px;"></div>
<div class="a r1" style="left:828px;top:287px;width:345px;height:20px;"></div>
<div class="a t13" style="left:830px;top:289px;">Krawcowie</div>
<div class="a t13" style="right:309px;top:289px;">6</div>
<div class="a t13" style="right:229px;top:289px;">40</div>
<div class="a t13" style="right:133px;top:289px;">27,08</div>
<div class="a ind" style="left:816px;top:307px;width:12px;height:20px;"></div>
<div class="a r0" style="left:828px;top:307px;width:345px;height:20px;"></div>
<div class="a t13" style="left:830px;top:309px;">Stolarze</div>
<div class="a t13" style="right:309px;top:309px;">9</div>
<div class="a t13" style="right:229px;top:309px;">72</div>
<div class="a t13" style="right:133px;top:309px;">23,11</div>
<svg style="left:820px;top:273px" width="4" height="7" viewBox="0 0 4 7"><path d="M0 0l4 3.500-4 3.500z" fill="#111"/></svg>
<div class="a " style="left:816px;top:501px;width:357px;height:36px;background:linear-gradient(#eef0f4 0,#e7eaf0 50%,#dde1ea 53%,#dadee8 100%);border-top:1px solid #c5cbd9"></div>
<div class="a cnt" style="left:830px;top:504px;width:96px;height:30px;padding:7px 0 0 10px">3 pozycji</div>
<div class="a " style="left:849.0px;width:400px;text-align:center;top:539px;font-size:11px;line-height:13px;letter-spacing:2.2px;color:#1e2233">UKRYJ SZCZEGÓŁY [F8]</div>
<div class="a " style="left:1042px;top:556px;width:2px;height:2px;background:#8f99b3"></div>
<div class="a " style="left:1046px;top:556px;width:2px;height:2px;background:#8f99b3"></div>
<div class="a " style="left:1050px;top:556px;width:2px;height:2px;background:#8f99b3"></div>
<div class="a " style="left:1054px;top:556px;width:2px;height:2px;background:#8f99b3"></div>
<div class="a tabA" style="left:820px;top:560px;width:95px;height:28px;"></div>
<svg style="left:832px;top:567px" width="12" height="14" viewBox="0 0 14 16"><path d="M2 6.500q0-5.500 5-5.500t5 5.500z" fill="#f0b82a" stroke="#a87a1a" stroke-width=".6"/><path d="M1 6.500h12" stroke="#c8901a" stroke-width="1.300"/><path d="M3.500 7h7v2q0 3-3.500 3t-3.500-3z" fill="#f3c79a" stroke="#a8702c" stroke-width=".5"/><rect x="3.500" y="7.300" width="7" height="1.800" fill="#333" opacity=".8"/><path d="M1 16q0-4.500 6-4.500t6 4.500z" fill="#4a5a8c" stroke="#2a3a5c" stroke-width=".5"/><path d="M5.500 12l1.500 3 1.500-3z" fill="#e8e8f0"/></svg>
<div class="a t11" style="left:850px;top:569px;color:#1e2233">Pracownicy</div>
<div class="a yl" style="left:816px;top:587px;width:466px;height:5px;border-radius:2px 2px 0 0"></div>
<div class="a yl" style="left:816px;top:759px;width:466px;height:4px;border-radius:0 0 2px 2px;box-shadow:0 1px 0 #9ba7c1"></div>
<div class="a " style="left:816px;top:590px;width:1px;height:171px;background:#9ba7c1"></div>
<div class="a " style="left:1281px;top:590px;width:1px;height:171px;background:#9ba7c1"></div>
<svg style="left:826px;top:598px" width="16" height="16" viewBox="0 0 16 16"><path d="M5.600 .600h4.800v5h5v4.800h-5v5h-4.800v-5h-5v-4.800h5z" fill="none" stroke="#e4ebf7" stroke-width="2.200" stroke-linejoin="round" opacity=".35"/><path d="M5.600 .600h4.800v5h5v4.800h-5v5h-4.800v-5h-5v-4.800h5z" fill="url(#gPlus)" stroke="#2257b8" stroke-width="1.100" stroke-linejoin="round"/><path d="M6.600 6.600v-5h2.800M1.600 9.400v-2.800h5M6.600 14.400v-4" fill="none" stroke="#a9cdf9" stroke-width=".9" opacity=".9"/><path d="M10.500 6.600h3.900" fill="none" stroke="#a9cdf9" stroke-width=".9" opacity=".9"/></svg>
<svg style="left:826px;top:626px" width="16" height="16" viewBox="0 0 16 16"><path d="M3 3.500h6.500l3 3v9h-11v-10.500q0-1.500 1.500-1.500z" fill="#fdfdfe" stroke="#aeb4c2" stroke-width="1" stroke-linejoin="round"/><path d="M12.500 15.500l-3-.5 3-2.500z" fill="#d5d9e2"/><path d="M3.800 13.200l1.200-3.600 7.600-7.600 2.400 2.400-7.600 7.600z" fill="#3c8ae6" stroke="#1a4a9a" stroke-width=".8" stroke-linejoin="round"/><path d="M3.800 13.200l1.200-3.600 2.400 2.400z" fill="#f0d8b0" stroke="#222" stroke-width=".6"/><path d="M3.800 13.200l.5-1.500 1 1z" fill="#111"/><path d="M11.400 3.200l2.400 2.400" stroke="#9cc4f4" stroke-width="1.200"/></svg>
<svg style="left:826px;top:654px" width="16" height="16" viewBox="0 0 16 16"><path d="M.500 .500h6.500l2.500 2.500v7.500h-9z" fill="#fbfcfe" stroke="#7f8da8" stroke-width="1"/><path d="M2 4.500h5M2 6.500h3" stroke="#8da3cc" stroke-width="1"/><path d="M5.500 4.500h6.500l3 3v8h-9.500z" fill="#fff" stroke="#44546f" stroke-width="1"/><path d="M12 4.500v3h3" fill="none" stroke="#44546f" stroke-width=".8"/><path d="M7.500 9.500h5.500M7.500 11.500h5.500M7.500 13.500h5.500" stroke="#7e97c4" stroke-width="1"/></svg>
<svg style="left:828px;top:684px" width="13" height="12.0" viewBox="0 0 13 12"><path d="M1 3l2.200-2.200 3.300 3 3.300-3 2.200 2.200-3.200 3 3.200 3-2.200 2.200-3.300-3-3.300 3-2.200-2.200 3.200-3z" fill="#46a2de" stroke="#8fcbee" stroke-width=".9" stroke-linejoin="round"/></svg>
<svg style="left:823px;top:714px" width="16" height="16" viewBox="0 0 16 16"><path d="M0 .500h3M1.500 .500v11.500M0 12h3" stroke="#0f1c4c" stroke-width="1.100" fill="none"/><rect x="4.500" y=".500" width="10" height="11" fill="#e9eef8" stroke="#b9c9ea" stroke-width="1"/><path d="M14.500 1v10.500h-9.500" fill="none" stroke="#6f98d6" stroke-width=".9"/><path d="M4.500 14.500h10.500M4.500 13v3M15 13v3" stroke="#0f1c4c" stroke-width="1.100" fill="none"/></svg>
<div class="a ghead2" style="left:850px;top:592px;width:382px;height:21px;"></div>
<svg style="left:852px;top:599px" width="7" height="7" viewBox="0 0 7 7"><path d="M3.500 0v7M0 3.500h7M1 1l5 5M6 1l-5 5" stroke="#15151c" stroke-width=".8"/><circle cx="3.500" cy="3.500" r="1" fill="#f2f3f7"/></svg>
<div class="a hd" style="left:864px;top:595px;">Kod</div>
<div class="a hd" style="left:964px;top:595px;">Imię</div>
<div class="a hd" style="left:1064px;top:595px;">Nazwisko</div>
<div class="a hd" style="left:1164px;top:595px;">Czas pracy</div>
<div class="a " style="left:960px;top:594px;width:2px;height:18px;border-left:1px solid #ccd1de;border-right:1px solid #eef0f5"></div>
<div class="a " style="left:1060px;top:594px;width:2px;height:18px;border-left:1px solid #ccd1de;border-right:1px solid #eef0f5"></div>
<div class="a " style="left:1160px;top:594px;width:2px;height:18px;border-left:1px solid #ccd1de;border-right:1px solid #eef0f5"></div>
<svg style="left:946px;top:600px" width="9" height="5" viewBox="0 0 9 5"><path d="M0 5l4.500-5 4.500 5z" fill="#a5adc2"/></svg>
<div class="a " style="left:850px;top:613px;width:12px;height:21px;background:#e4e7ee"></div>
<svg style="left:853px;top:621px" width="5" height="8" viewBox="0 0 5 8"><ellipse cx="2.500" cy="2.200" rx="2.300" ry="2" fill="#1c1c24"/><circle cx="3" cy="1.800" r=".6" fill="#f0f0f4"/><path d="M2.500 4v3.500" stroke="#1c1c24" stroke-width="1.200"/></svg>
<div class="a " style="left:862px;top:613px;width:370px;height:21px;background:#ebf5ea"></div>
<div class="a flt" style="left:896.0px;width:300px;text-align:center;top:616px;">kliknij aby dodać filtr</div>
<div class="a gsep" style="left:850px;top:634px;width:382px;height:2px;"></div>
<div class="a ind" style="left:850px;top:636px;width:12px;height:20px;"></div>
<div class="a r0" style="left:862px;top:636px;width:370px;height:20px;"></div>
<div class="a t13" style="left:864px;top:638px;transform:scaleX(.88);transform-origin:0 0">AG</div>
<div class="a t13" style="left:964px;top:638px;">Pracownik 6</div>
<div class="a t13" style="left:1064px;top:638px;">Pracownik 6</div>
<div class="a t13" style="right:74px;top:638px;">8</div>
<div class="a ind" style="left:850px;top:656px;width:12px;height:20px;"></div>
<div class="a rfoc" style="left:862px;top:656px;width:370px;height:20px;"></div>
<div class="a t13" style="left:864px;top:658px;">an</div>
<div class="a t13" style="left:964px;top:658px;">Pracownik 2</div>
<div class="a t13" style="left:1064px;top:658px;">Pracownik 2</div>
<div class="a t13" style="right:74px;top:658px;">8</div>
<div class="a ind" style="left:850px;top:676px;width:12px;height:20px;"></div>
<div class="a r0" style="left:862px;top:676px;width:370px;height:20px;"></div>
<div class="a t13" style="left:864px;top:678px;transform:scaleX(.88);transform-origin:0 0">AS</div>
<div class="a t13" style="left:964px;top:678px;">Pracownik 4</div>
<div class="a t13" style="left:1064px;top:678px;">Pracownik 4</div>
<div class="a t13" style="right:74px;top:678px;">8</div>
<div class="a ind" style="left:850px;top:696px;width:12px;height:20px;"></div>
<div class="a r1" style="left:862px;top:696px;width:370px;height:20px;"></div>
<div class="a t13" style="left:864px;top:698px;transform:scaleX(.88);transform-origin:0 0">CB</div>
<div class="a t13" style="left:964px;top:698px;">Pracownik 13</div>
<div class="a t13" style="left:1064px;top:698px;">Pracownik 13</div>
<div class="a t13" style="right:74px;top:698px;">8</div>
<div class="a ind" style="left:850px;top:716px;width:12px;height:20px;"></div>
<div class="a r0" style="left:862px;top:716px;width:370px;height:20px;"></div>
<div class="a t13" style="left:864px;top:718px;transform:scaleX(.88);transform-origin:0 0">DT</div>
<div class="a t13" style="left:964px;top:718px;">Pracownik 14</div>
<div class="a t13" style="left:1064px;top:718px;">Pracownik 14</div>
<div class="a t13" style="right:74px;top:718px;">8</div>
<div class="a ind" style="left:850px;top:736px;width:12px;height:6px;"></div>
<div class="a r1" style="left:862px;top:736px;width:370px;height:6px;"></div>
<svg style="left:854px;top:662px" width="4" height="7" viewBox="0 0 4 7"><path d="M0 0l4 3.500-4 3.500z" fill="#111"/></svg>
<div class="a sb" style="left:1232px;top:592px;width:16px;height:150px;"></div>
<svg style="left:1237px;top:598px" width="7" height="4" viewBox="0 0 7 4"><path d="M0 4l3.500-4 3.500 4z" fill="#9aa2b6"/></svg>
<svg style="left:1237px;top:731px" width="7" height="4" viewBox="0 0 7 4"><path d="M0 0l3.500 4 3.500-4z" fill="#9aa2b6"/></svg>
<div class="a thumbv" style="left:1233px;top:610px;width:14px;height:50px;"></div>
<div class="a " style="left:1236px;top:631px;width:8px;height:1px;background:#5d6680"></div>
<div class="a " style="left:1236px;top:633px;width:8px;height:1px;background:#5d6680"></div>
<div class="a " style="left:1236px;top:635px;width:8px;height:1px;background:#5d6680"></div>
<div class="a " style="left:1236px;top:637px;width:8px;height:1px;background:#5d6680"></div>
<div class="a sb" style="left:850px;top:742px;width:382px;height:15px;"></div>
<svg style="left:856px;top:746px" width="4" height="7" viewBox="0 0 4 7"><path d="M4 0l-4 3.500 4 3.500z" fill="#9aa2b6"/></svg>
<svg style="left:1221px;top:746px" width="4" height="7" viewBox="0 0 4 7"><path d="M0 0l4 3.500-4 3.500z" fill="#9aa2b6"/></svg>
<div class="a thumb" style="left:867px;top:743px;width:272px;height:13px;"></div>
<div class="a " style="left:1000px;top:746px;width:1px;height:7px;background:#5d6680"></div>
<div class="a " style="left:1002px;top:746px;width:1px;height:7px;background:#5d6680"></div>
<div class="a " style="left:1004px;top:746px;width:1px;height:7px;background:#5d6680"></div>
<svg style="left:1257px;top:598px" width="16" height="15" viewBox="0 0 16 15"><path d="M7 2.5h7.500" stroke="#fff" stroke-width="3" stroke-linecap="round" opacity=".9"/><circle cx="2.200" cy="2.5" r="1.350" fill="#f2f8ff" stroke="#2f78d0" stroke-width=".9"/><path d="M6.300 2.5h8.400" stroke="#2a3450" stroke-width="1.400"/><path d="M7 7.5h7.500" stroke="#fff" stroke-width="3" stroke-linecap="round" opacity=".9"/><circle cx="2.200" cy="7.5" r="1.350" fill="#f2f8ff" stroke="#2f78d0" stroke-width=".9"/><path d="M6.300 7.5h8.400" stroke="#2a3450" stroke-width="1.400"/><path d="M7 12.5h7.500" stroke="#fff" stroke-width="3" stroke-linecap="round" opacity=".9"/><circle cx="2.200" cy="12.5" r="1.350" fill="#f2f8ff" stroke="#2f78d0" stroke-width=".9"/><path d="M6.300 12.5h8.400" stroke="#2a3450" stroke-width="1.400"/></svg>
<div class="a " style="left:1042px;top:765px;width:2px;height:2px;background:#8f99b3"></div>
<div class="a " style="left:1046px;top:765px;width:2px;height:2px;background:#8f99b3"></div>
<div class="a " style="left:1050px;top:765px;width:2px;height:2px;background:#8f99b3"></div>
<div class="a " style="left:1054px;top:765px;width:2px;height:2px;background:#8f99b3"></div>
<div class="a " style="left:19px;top:217px;width:141px;height:33px;border:2px solid #ee1c25;border-radius:6px"></div>
<div class="a " style="left:151.5px;top:216.5px;width:30px;height:30px;border-radius:50%;background:rgba(221,36,44,.9);border:2px solid #f4242e"></div>
<div class="a " style="left:151.5px;width:30px;text-align:center;top:224px;font-size:14px;line-height:16px;color:#fff">1</div>
<div class="a " style="left:200px;top:104px;width:42px;height:38px;border:2px solid #ee1c25;border-radius:6px"></div>
<div class="a " style="left:226.5px;top:132.5px;width:30px;height:30px;border-radius:50%;background:rgba(221,36,44,.9);border:2px solid #f4242e"></div>
<div class="a " style="left:226.5px;width:30px;text-align:center;top:140px;font-size:14px;line-height:16px;color:#fff">2</div>
</body></html>
